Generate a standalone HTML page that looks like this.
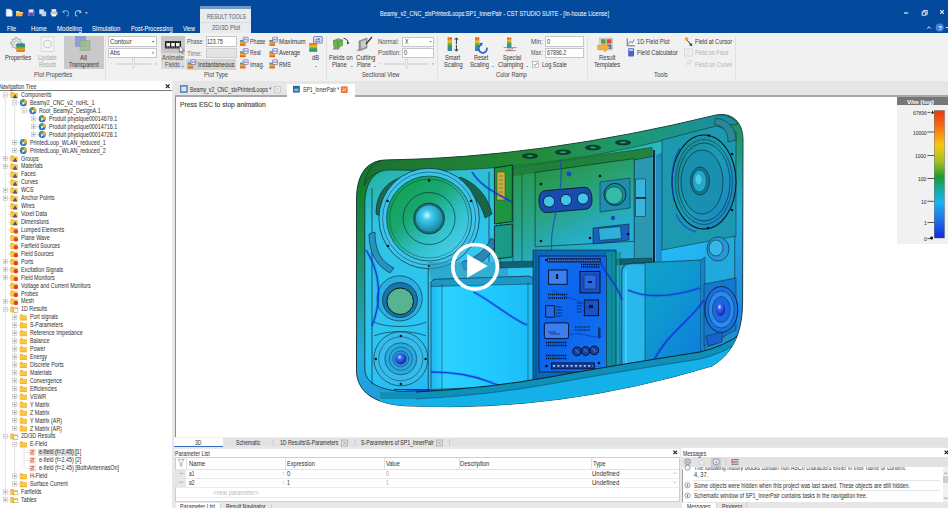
<!DOCTYPE html>
<html><head><meta charset="utf-8"><style>*{box-sizing:border-box}
html,body{margin:0;padding:0;width:948px;height:508px;overflow:hidden;background:#f0f0f0;font-family:"Liberation Sans",sans-serif}
.a{position:absolute}
.t{position:absolute;white-space:pre;line-height:1;transform-origin:0 0}
svg{overflow:visible}</style></head><body>
<div class="a" style="left:0.00px;top:0.00px;width:948.00px;height:33.00px;background:#034a9c;"></div>
<div class="a" style="left:0.00px;top:33.00px;width:948.00px;height:48.00px;background:#f1f1f1;"></div>
<div class="a" style="left:200.30px;top:6.00px;width:50.60px;height:27.00px;background:#e9ecef;"></div>
<div class="a" style="left:200.30px;top:6.00px;width:50.60px;height:3.00px;background:#6f9ac3;"></div>
<div class="a" style="left:200.30px;top:22.30px;width:50.60px;height:0.60px;background:#d6dbe0;"></div>
<svg class="a" style="left:0;top:0" width="100" height="22" viewBox="0 0 100 22">
<path d="M6.2 9.2h4.2l1.8 1.8v5.2h-6z" fill="#f4f6fa" stroke="#c9d3e3" stroke-width=".5"/>
<path d="M16 11h3l1 1h3.4l-1.2 4.2h-6.2z" fill="#f3b341"/><path d="M16.2 11.2h2.6l.8.9h2.4v1H16.2z" fill="#f9d27a"/>
<rect x="28" y="9.4" width="6.4" height="6.6" fill="#7b6fd0"/><rect x="29.2" y="9.6" width="4" height="2.6" fill="#e8e8f5"/><rect x="29.4" y="13.4" width="3.6" height="2.4" fill="#5448a8"/>
<rect x="39.3" y="9.4" width="4.6" height="4.8" fill="#dfe6f2"/><rect x="41.6" y="11.4" width="4.6" height="4.8" fill="#c3cfe3"/>
<rect x="51.6" y="9.2" width="4.6" height="2.6" fill="#f2f2f2"/><rect x="50.6" y="11.6" width="6.8" height="3.4" fill="#c8c8c8"/><rect x="51.6" y="14.2" width="4.6" height="2.2" fill="#fafafa"/>
<path d="M64 10.2 l-1.4 2.2 2.2 .4" fill="none" stroke="#67a7ee" stroke-width="1"/><path d="M63.2 12.1c1.8-2.6 5.4-1.6 5.4 1.4 0 1.4-1 2.4-2 2.6" fill="none" stroke="#67a7ee" stroke-width="1.1"/>
<path d="M79.8 10.2 l1.4 2.2 -2.2 .4" fill="none" stroke="#b8c4d6" stroke-width="1"/><path d="M80.6 12.1c-1.8-2.6-5.4-1.6-5.4 1.4 0 1.4 1 2.4 2 2.6" fill="none" stroke="#b8c4d6" stroke-width="1.1"/>
<path d="M85 12.2h3l-1.5 1.8z" fill="#c9d6ea"/>
</svg>
<svg class="a" style="left:880px;top:0" width="68" height="33" viewBox="880 0 68 33">
<rect x="904" y="12.4" width="4.2" height="1.2" fill="#dfe7f3"/>
<rect x="923.6" y="10.6" width="3.6" height="3.6" fill="none" stroke="#dfe7f3" stroke-width="1"/><rect x="922.2" y="12" width="3.6" height="3.2" fill="#034a9c" stroke="#dfe7f3" stroke-width="1"/>
<path d="M940.2 10.2l3.6 3.6M943.8 10.2l-3.6 3.6" stroke="#e9eef6" stroke-width="1.1"/>
<path d="M927.2 28.6l1.8-1.8 1.8 1.8" fill="none" stroke="#dfe7f3" stroke-width="1"/>
<circle cx="939.7" cy="27.4" r="4" fill="#4d8ff0"/><circle cx="939.7" cy="27.4" r="3.3" fill="#3b7de6"/>
<text x="938.2" y="29.6" font-size="6" font-family="Liberation Sans" font-weight="700" fill="#fff">?</text>
<rect x="945.8" y="27" width="2.2" height="1" fill="#dfe7f3"/>
</svg>
<div class="a" style="left:105.00px;top:36.00px;width:0.80px;height:43.00px;background:#e0e0e0;"></div>
<div class="a" style="left:325.60px;top:36.00px;width:0.80px;height:43.00px;background:#e0e0e0;"></div>
<div class="a" style="left:436.60px;top:36.00px;width:0.80px;height:43.00px;background:#e0e0e0;"></div>
<div class="a" style="left:586.60px;top:36.00px;width:0.80px;height:43.00px;background:#e0e0e0;"></div>
<div class="a" style="left:735.00px;top:36.00px;width:0.80px;height:43.00px;background:#e0e0e0;"></div>
<div class="a" style="left:64.00px;top:35.80px;width:39.60px;height:33.70px;background:#c9c9c9;"></div>
<svg class="a" style="left:0;top:33px" width="110" height="22" viewBox="0 33 110 22">
<defs><linearGradient id="pb" x1="0" y1="0" x2="0" y2="1"><stop offset="0" stop-color="#2f5fd6"/><stop offset=".4" stop-color="#3aa845"/><stop offset=".7" stop-color="#f0a020"/><stop offset="1" stop-color="#e8481c"/></linearGradient></defs>
<path d="M20.60 42.27 L21.85 42.43 L21.85 43.97 L20.60 44.13 L20.00 45.58 L20.77 46.58 L19.68 47.67 L18.68 46.90 L17.23 47.50 L17.07 48.75 L15.53 48.75 L15.37 47.50 L13.92 46.90 L12.92 47.67 L11.83 46.58 L12.60 45.58 L12.00 44.13 L10.75 43.97 L10.75 42.43 L12.00 42.27 L12.60 40.82 L11.83 39.82 L12.92 38.73 L13.92 39.50 L15.37 38.90 L15.53 37.65 L17.07 37.65 L17.23 38.90 L18.68 39.50 L19.68 38.73 L20.77 39.82 L20.00 40.82Z" fill="#e6e6e6" stroke="#8a8a8a" stroke-width=".7"/>
<circle cx="16.3" cy="43.2" r="2.2" fill="#f4f4f4" stroke="#9a9a9a" stroke-width=".6"/>
<rect x="16.2" y="43.4" width="8.8" height="8.4" rx=".8" fill="url(#pb)"/>
<rect x="41.1" y="36.8" width="12.8" height="14.6" fill="#f4f4f4" stroke="#cfcfcf" stroke-width=".7"/>
<circle cx="47.5" cy="44" r="3.8" fill="none" stroke="#c8c8c8" stroke-width="1.1"/>
<rect x="75.6" y="36.6" width="10" height="9.6" fill="#8c9fd6" stroke="#7584c0" stroke-width=".5"/>
<rect x="80" y="40.6" width="10" height="10" fill="#9dbb92" fill-opacity=".85" stroke="#86a57a" stroke-width=".5"/>
</svg>
<div class="a" style="left:108.40px;top:36.40px;width:49.00px;height:10.80px;background:#ffffff;border:0.7px solid #c6c6c6"></div>
<div class="a" style="left:108.40px;top:48.00px;width:49.00px;height:10.20px;background:#ffffff;border:0.7px solid #c6c6c6"></div>
<div class="a" style="left:161.00px;top:36.00px;width:24.30px;height:16.60px;background:#c6c6c6;"></div>
<div class="a" style="left:161.00px;top:52.60px;width:24.30px;height:16.90px;background:#dadada;"></div>
<div class="a" style="left:205.60px;top:36.30px;width:31.70px;height:10.30px;background:#ffffff;border:0.7px solid #c6c6c6"></div>
<div class="a" style="left:205.60px;top:47.70px;width:31.70px;height:10.50px;background:#e3e3e3;border:0.7px solid #d0d0d0"></div>
<div class="a" style="left:186.00px;top:59.00px;width:49.70px;height:10.60px;background:#d3d3d3;"></div>
<svg class="a" style="left:100px;top:33px" width="230" height="40" viewBox="100 33 230 40">
<defs><linearGradient id="rb" x1="0" y1="0" x2="0" y2="1"><stop offset="0" stop-color="#2f7fd6"/><stop offset=".5" stop-color="#f0b020"/><stop offset="1" stop-color="#e8481c"/></linearGradient>
<linearGradient id="db" x1="0" y1="0" x2="0" y2="1"><stop offset="0" stop-color="#e8481c"/><stop offset=".35" stop-color="#f0c020"/><stop offset=".65" stop-color="#3aa845"/><stop offset="1" stop-color="#2f7fd6"/></linearGradient></defs>
<path d="M151.8 41h2.6l-1.3 1.4z" fill="#555"/><path d="M151.8 52.4h2.6l-1.3 1.4z" fill="#555"/>
<rect x="110" y="63.6" width="1.8" height=".6" fill="#bbb"/><rect x="115.7" y="63.4" width="35.3" height="1.2" fill="#cfcfcf"/>
<rect x="132.6" y="59.6" width="2" height="8.4" fill="#f6f6f6" stroke="#c2c2c2" stroke-width=".5"/>
<path d="M155 63.9h2.4M156.2 62.7v2.4" stroke="#bbb" stroke-width=".5"/>
<rect x="165" y="41" width="16" height="7.4" fill="#1a1a1a"/>
<rect x="166.4" y="43" width="3.6" height="3.4" fill="#f4f4f4"/><rect x="171.2" y="43" width="3.6" height="3.4" fill="#f4f4f4"/><rect x="176" y="43" width="3.6" height="3.4" fill="#f4f4f4"/><path d="M165.6 41.9h15M165.6 47.5h15" stroke="#f4f4f4" stroke-width=".45" stroke-dasharray=".8 .9"/>
<path d="M179.4 45.6v7l1.6-1.5 1.2 2.6 1-.5-1.2-2.5h2.2z" fill="#fff" stroke="#222" stroke-width=".5"/>
<path d="M182 66h1.8l-.9 1z" fill="#2a5aa8"/>
<rect x="240" y="40" width="5.6" height="5.8" fill="url(#rb)"/><rect x="243.2" y="37.2" width="5" height="4.8" rx=".5" fill="#f4f5fb" stroke="#4a5aa8" stroke-width=".6"/><path d="M244.4 38.4v2.4M246.9 38.4v2.4M244.4 39.6h2.5" stroke="#3a4a98" stroke-width=".5"/><rect x="240" y="51.4" width="5.6" height="5.8" fill="url(#rb)"/><rect x="243.2" y="48.6" width="5" height="4.8" rx=".5" fill="#f4f5fb" stroke="#4a5aa8" stroke-width=".6"/><path d="M244.4 49.8v2.4M246.9 49.8v2.4M244.4 51.0h2.5" stroke="#3a4a98" stroke-width=".5"/><rect x="240" y="62.6" width="5.6" height="5.8" fill="url(#rb)"/><rect x="243.2" y="59.800000000000004" width="5" height="4.8" rx=".5" fill="#f4f5fb" stroke="#4a5aa8" stroke-width=".6"/><path d="M244.4 61.0v2.4M246.9 61.0v2.4M244.4 62.2h2.5" stroke="#3a4a98" stroke-width=".5"/><rect x="269.4" y="40" width="5.6" height="5.8" fill="url(#rb)"/><rect x="272.59999999999997" y="37.2" width="5" height="4.8" rx=".5" fill="#f4f5fb" stroke="#4a5aa8" stroke-width=".6"/><path d="M273.79999999999995 38.4v2.4M276.29999999999995 38.4v2.4M273.79999999999995 39.6h2.5" stroke="#3a4a98" stroke-width=".5"/><rect x="269.4" y="51.4" width="5.6" height="5.8" fill="url(#rb)"/><rect x="272.59999999999997" y="48.6" width="5" height="4.8" rx=".5" fill="#f4f5fb" stroke="#4a5aa8" stroke-width=".6"/><path d="M273.79999999999995 49.8v2.4M276.29999999999995 49.8v2.4M273.79999999999995 51.0h2.5" stroke="#3a4a98" stroke-width=".5"/><rect x="269.4" y="62.6" width="5.6" height="5.8" fill="url(#rb)"/><rect x="272.59999999999997" y="59.800000000000004" width="5" height="4.8" rx=".5" fill="#f4f5fb" stroke="#4a5aa8" stroke-width=".6"/><path d="M273.79999999999995 61.0v2.4M276.29999999999995 61.0v2.4M273.79999999999995 62.2h2.5" stroke="#3a4a98" stroke-width=".5"/><rect x="187.6" y="62.6" width="5.6" height="5.8" fill="url(#rb)"/><rect x="190.79999999999998" y="59.800000000000004" width="5" height="4.8" rx=".5" fill="#f4f5fb" stroke="#4a5aa8" stroke-width=".6"/><path d="M192.0 61.0v2.4M194.5 61.0v2.4M192.0 62.2h2.5" stroke="#3a4a98" stroke-width=".5"/>
<rect x="313.6" y="36.6" width="8.6" height="6.4" rx=".8" fill="#eef0f8" stroke="#4a5aa8" stroke-width=".8"/>
<text x="314.8" y="41.8" font-size="4.6" font-family="Liberation Sans" fill="#3a4aa0">dB</text>
<rect x="309.2" y="43.2" width="8" height="8.6" fill="url(#db)"/>
<path d="M315 66h1.8l-.9 1z" fill="#2a5aa8"/>
</svg>
<div class="a" style="left:402.00px;top:36.50px;width:32.00px;height:10.10px;background:#ffffff;border:0.7px solid #c6c6c6"></div>
<div class="a" style="left:402.00px;top:47.70px;width:32.00px;height:10.80px;background:#ffffff;border:0.7px solid #c6c6c6"></div>
<div class="a" style="left:545.40px;top:36.30px;width:38.80px;height:10.30px;background:#ffffff;border:0.7px solid #c6c6c6"></div>
<div class="a" style="left:545.40px;top:47.70px;width:38.80px;height:10.80px;background:#ffffff;border:0.7px solid #c6c6c6"></div>
<svg class="a" style="left:325px;top:33px" width="415" height="40" viewBox="325 33 415 40">
<defs><linearGradient id="sb" x1="0" y1="0" x2="0" y2="1"><stop offset="0" stop-color="#e8481c"/><stop offset=".3" stop-color="#f0c020"/><stop offset=".6" stop-color="#3aa845"/><stop offset="1" stop-color="#2f7fd6"/></linearGradient></defs>
<path d="M336 43.2l6-2.4-3 8.6h-6.4z" fill="#8a8a8a"/>
<path d="M333 40.2l5-2 5 1.6v6l-5 2.2-5-1.8z" fill="#6fae56"/><path d="M333 40.2l5 1.8 5-2.2M338 42v6" stroke="#4d8a3a" stroke-width=".5" fill="none"/>
<path d="M343.6 38.4c3 .2 4.6 2.4 4.4 5" fill="none" stroke="#222" stroke-width=".9"/><path d="M346.6 42.4l1.4 2.2 1.2-2.4z" fill="#222"/>
<path d="M351 66h1.8l-.9 1z" fill="#2a5aa8"/><path d="M374 66h1.8l-.9 1z" fill="#2a5aa8"/>
<path d="M359 41l8-3v10l-8 3z" fill="#9b9b9b" stroke="#6a6a6a" stroke-width=".5"/>
<path d="M361 41.5l5-1.8v7l-5 1.8z" fill="#c9c9c9"/>
<path d="M366 44l6-7" stroke="#333" stroke-width="1.2"/><path d="M356.5 51l4-3" stroke="#e0702a" stroke-width=".9"/>
<path d="M429.4 41.2h2.4l-1.2 1.3z" fill="#555"/>
<rect x="378.6" y="63.6" width="2" height=".6" fill="#aaa"/><rect x="384" y="63.4" width="44.4" height="1.2" fill="#cfcfcf"/>
<rect x="405.8" y="59.2" width="2" height="9" fill="#f6f6f6" stroke="#c2c2c2" stroke-width=".5"/>
<path d="M431.6 63.9h2.4M432.8 62.7v2.4" stroke="#aaa" stroke-width=".5"/>
<rect x="447.6" y="37.4" width="4.4" height="13.6" fill="url(#sb)"/>
<path d="M456.4 38v6M454.6 39.8l1.8-2 1.8 2M456.4 45v6M454.6 49.2l1.8 2 1.8-2" stroke="#1a1a1a" stroke-width=".9" fill="none"/>
<rect x="475" y="37.4" width="4.4" height="13.6" fill="url(#sb)"/>
<path d="M481.4 44.6a4.2 4.2 0 1 0 5.4 3" fill="none" stroke="#2a64c4" stroke-width="1.8"/><path d="M479.2 43l3.6-.2-1 3.2z" fill="#2a64c4"/>
<path d="M492 66h1.8l-.9 1z" fill="#2a5aa8"/>
<rect x="507" y="37.6" width="4.4" height="10" fill="url(#sb)"/>
<path d="M503.6 47.6h13M505 50.6h11" stroke="#c23a1a" stroke-width=".6"/>
<text x="507" y="51" font-size="3.6" font-family="Liberation Sans" fill="#555">10T</text>
<path d="M526.4 66h1.8l-.9 1z" fill="#2a5aa8"/>
<path d="M580.2 41.2h0" />
<rect x="532.6" y="61.6" width="5.6" height="5.6" fill="#fff" stroke="#9a9a9a" stroke-width=".6"/>
<path d="M533.8 64.2l1.3 1.5 2.3-2.8" fill="none" stroke="#333" stroke-width=".6"/>
<rect x="599.6" y="38" width="13.2" height="12" fill="#d8d8d8" stroke="#aaa" stroke-width=".4"/>
<rect x="601" y="39.2" width="4.6" height="4.4" fill="#3aa845"/><rect x="606.8" y="39.2" width="4.6" height="4.4" fill="#e34a2a"/>
<rect x="601" y="44.6" width="4.6" height="4.4" fill="#f0b020"/><rect x="606.8" y="44.6" width="4.6" height="4.4" fill="#3f6fd0"/>
<path d="M597.6 45.2h7v-2.4l5.4 4.6-5.4 4.6v-2.4h-7z" fill="#f5b032" stroke="#d08a10" stroke-width=".4"/>
<path d="M627.2 38.4v7.4h7.6" fill="none" stroke="#333" stroke-width=".7"/><path d="M628.4 44l2-3 1.8 2 2.2-3.6" fill="none" stroke="#3b6fd6" stroke-width=".8"/>
<rect x="628.2" y="48.2" width="5.8" height="8.4" rx=".8" fill="#4a62c8"/><rect x="629.2" y="49.2" width="3.8" height="1.8" fill="#c6d0f0"/>
<circle cx="686.6" cy="39" r="1.8" fill="#f0a020"/><path d="M687.4 40.4l3.4 4.2" stroke="#333" stroke-width="1"/><rect x="689.6" y="43.4" width="2.6" height="2.6" fill="#555"/>
<rect x="684.6" y="49" width="8" height="7" fill="none" stroke="#cfcfcf" stroke-width=".7"/><path d="M685.6 52.4h6M688.4 50v5" stroke="#d8d8d8" stroke-width=".5"/>
<path d="M685 67.6l3-5 1.6 2 2.4-4.4" fill="none" stroke="#cfcfcf" stroke-width=".7"/><rect x="688" y="60" width="3" height="3" fill="none" stroke="#d0d0d0" stroke-width=".5"/>
</svg>
<div class="a" style="left:0.00px;top:81.00px;width:171.50px;height:427.00px;background:#ffffff;"></div>
<div class="a" style="left:171.50px;top:81.00px;width:3.10px;height:427.00px;background:#e8e8e8;"></div>
<div class="a" style="left:0.00px;top:90.00px;width:171.50px;height:1.00px;background:#7a7a7a;"></div>
<div class="a" style="left:38.20px;top:448.60px;width:39.80px;height:7.40px;background:#dcdcdc;"></div>
<svg class="a" style="left:0;top:81px" width="171" height="427" viewBox="0 81 171 427"><path d="M5.3 97.4V499.84000000000003" stroke="#d0d0d0" stroke-width=".6"/><path d="M14.7 97.9V150.48000000000002" stroke="#d0d0d0" stroke-width=".6"/><path d="M24.1 105.84V110.78M33.5 113.78V134.60000000000002" stroke="#d0d0d0" stroke-width=".6"/><path d="M14.7 312.28000000000003V428.38M14.7 439.32000000000005V483.96000000000004M24.1 447.26V468.08000000000004" stroke="#d0d0d0" stroke-width=".6"/><path d="M7.3 94.9H10.5" stroke="#d0d0d0" stroke-width=".6"/><rect x="3.1999999999999997" y="92.80000000000001" width="4.2" height="4.2" fill="#fff" stroke="#b4b4b4" stroke-width=".5"/><path d="M4.1 94.9h2.4" stroke="#555" stroke-width=".5"/><path d="M10.5 92.10000000000001h2.6l.8 1h3.6v5h-7z" fill="#f2b230"/><path d="M10.5 93.5h7v3.6h-7z" fill="#f7c64a"/><path d="M15.1 94.30000000000001l2.4 4h-4.8z" fill="#4a5470"/><path d="M16.7 102.84H19.9" stroke="#d0d0d0" stroke-width=".6"/><rect x="12.6" y="100.74000000000001" width="4.2" height="4.2" fill="#fff" stroke="#b4b4b4" stroke-width=".5"/><path d="M13.5 102.84h2.4" stroke="#555" stroke-width=".5"/><circle cx="23.4" cy="102.84" r="3.5" fill="#2f6fd0"/><path d="M23.4 102.84L20.0 102.04A3.5 3.5 0 0 1 24.0 99.39z" fill="#3aa845"/><path d="M23.4 102.84L24.0 99.39A3.5 3.5 0 0 1 26.7 104.04z" fill="#f0a830"/><path d="M22.4 101.84l2.4 1.6-2.4 1.6z" fill="#fff"/><path d="M26.1 110.78H29.3" stroke="#d0d0d0" stroke-width=".6"/><rect x="22.0" y="108.68" width="4.2" height="4.2" fill="#fff" stroke="#b4b4b4" stroke-width=".5"/><path d="M22.900000000000002 110.78h2.4" stroke="#555" stroke-width=".5"/><circle cx="32.8" cy="110.78" r="3.5" fill="#2f6fd0"/><path d="M32.8 110.78L29.4 109.98A3.5 3.5 0 0 1 33.4 107.33z" fill="#3aa845"/><path d="M32.8 110.78L33.4 107.33A3.5 3.5 0 0 1 36.099999999999994 111.98z" fill="#f0a830"/><path d="M31.799999999999997 109.78l2.4 1.6-2.4 1.6z" fill="#fff"/><path d="M35.5 118.72H38.7" stroke="#d0d0d0" stroke-width=".6"/><rect x="31.4" y="116.62" width="4.2" height="4.2" fill="#fff" stroke="#b4b4b4" stroke-width=".5"/><path d="M32.3 118.72h2.4" stroke="#555" stroke-width=".5"/><path d="M33.5 117.52v2.4" stroke="#555" stroke-width=".5"/><circle cx="42.2" cy="118.72" r="3.5" fill="#2f6fd0"/><path d="M42.2 118.72L38.800000000000004 117.92A3.5 3.5 0 0 1 42.800000000000004 115.27z" fill="#3aa845"/><path d="M42.2 118.72L42.800000000000004 115.27A3.5 3.5 0 0 1 45.5 119.92z" fill="#f0a830"/><path d="M41.2 117.72l2.4 1.6-2.4 1.6z" fill="#fff"/><path d="M35.5 126.66000000000001H38.7" stroke="#d0d0d0" stroke-width=".6"/><rect x="31.4" y="124.56000000000002" width="4.2" height="4.2" fill="#fff" stroke="#b4b4b4" stroke-width=".5"/><path d="M32.3 126.66000000000001h2.4" stroke="#555" stroke-width=".5"/><path d="M33.5 125.46000000000001v2.4" stroke="#555" stroke-width=".5"/><circle cx="42.2" cy="126.66000000000001" r="3.5" fill="#2f6fd0"/><path d="M42.2 126.66000000000001L38.800000000000004 125.86000000000001A3.5 3.5 0 0 1 42.800000000000004 123.21000000000001z" fill="#3aa845"/><path d="M42.2 126.66000000000001L42.800000000000004 123.21000000000001A3.5 3.5 0 0 1 45.5 127.86000000000001z" fill="#f0a830"/><path d="M41.2 125.66000000000001l2.4 1.6-2.4 1.6z" fill="#fff"/><path d="M35.5 134.60000000000002H38.7" stroke="#d0d0d0" stroke-width=".6"/><rect x="31.4" y="132.50000000000003" width="4.2" height="4.2" fill="#fff" stroke="#b4b4b4" stroke-width=".5"/><path d="M32.3 134.60000000000002h2.4" stroke="#555" stroke-width=".5"/><path d="M33.5 133.40000000000003v2.4" stroke="#555" stroke-width=".5"/><circle cx="42.2" cy="134.60000000000002" r="3.5" fill="#2f6fd0"/><path d="M42.2 134.60000000000002L38.800000000000004 133.8A3.5 3.5 0 0 1 42.800000000000004 131.15000000000003z" fill="#3aa845"/><path d="M42.2 134.60000000000002L42.800000000000004 131.15000000000003A3.5 3.5 0 0 1 45.5 135.8z" fill="#f0a830"/><path d="M41.2 133.60000000000002l2.4 1.6-2.4 1.6z" fill="#fff"/><path d="M16.7 142.54000000000002H19.9" stroke="#d0d0d0" stroke-width=".6"/><rect x="12.6" y="140.44000000000003" width="4.2" height="4.2" fill="#fff" stroke="#b4b4b4" stroke-width=".5"/><path d="M13.5 142.54000000000002h2.4" stroke="#555" stroke-width=".5"/><path d="M14.7 141.34000000000003v2.4" stroke="#555" stroke-width=".5"/><circle cx="23.4" cy="142.54000000000002" r="3.5" fill="#2f6fd0"/><path d="M23.4 142.54000000000002L20.0 141.74A3.5 3.5 0 0 1 24.0 139.09000000000003z" fill="#3aa845"/><path d="M23.4 142.54000000000002L24.0 139.09000000000003A3.5 3.5 0 0 1 26.7 143.74z" fill="#f0a830"/><path d="M22.4 141.54000000000002l2.4 1.6-2.4 1.6z" fill="#fff"/><path d="M16.7 150.48000000000002H19.9" stroke="#d0d0d0" stroke-width=".6"/><rect x="12.6" y="148.38000000000002" width="4.2" height="4.2" fill="#fff" stroke="#b4b4b4" stroke-width=".5"/><path d="M13.5 150.48000000000002h2.4" stroke="#555" stroke-width=".5"/><path d="M14.7 149.28000000000003v2.4" stroke="#555" stroke-width=".5"/><circle cx="23.4" cy="150.48000000000002" r="3.5" fill="#2f6fd0"/><path d="M23.4 150.48000000000002L20.0 149.68A3.5 3.5 0 0 1 24.0 147.03000000000003z" fill="#3aa845"/><path d="M23.4 150.48000000000002L24.0 147.03000000000003A3.5 3.5 0 0 1 26.7 151.68z" fill="#f0a830"/><path d="M22.4 149.48000000000002l2.4 1.6-2.4 1.6z" fill="#fff"/><path d="M7.3 158.42000000000002H10.5" stroke="#d0d0d0" stroke-width=".6"/><rect x="3.1999999999999997" y="156.32000000000002" width="4.2" height="4.2" fill="#fff" stroke="#b4b4b4" stroke-width=".5"/><path d="M4.1 158.42000000000002h2.4" stroke="#555" stroke-width=".5"/><path d="M5.3 157.22000000000003v2.4" stroke="#555" stroke-width=".5"/><path d="M10.5 155.62h2.6l.8 1h3.6v5h-7z" fill="#f2b230"/><path d="M10.5 157.02h7v3.6h-7z" fill="#f7c64a"/><path d="M15.1 157.82000000000002l2.4 4h-4.8z" fill="#4a5470"/><path d="M7.3 166.36H10.5" stroke="#d0d0d0" stroke-width=".6"/><rect x="3.1999999999999997" y="164.26000000000002" width="4.2" height="4.2" fill="#fff" stroke="#b4b4b4" stroke-width=".5"/><path d="M4.1 166.36h2.4" stroke="#555" stroke-width=".5"/><path d="M5.3 165.16000000000003v2.4" stroke="#555" stroke-width=".5"/><path d="M10.5 163.56h2.6l.8 1h3.6v5h-7z" fill="#f2b230"/><path d="M10.5 164.96h7v3.6h-7z" fill="#f7c64a"/><path d="M15.1 165.76000000000002l2.4 4h-4.8z" fill="#4a5470"/><path d="M7.3 174.3H10.5" stroke="#d0d0d0" stroke-width=".6"/><path d="M10.5 171.5h2.6l.8 1h3.6v5h-7z" fill="#f2b230"/><path d="M10.5 172.9h7v3.6h-7z" fill="#f7c64a"/><path d="M15.1 173.70000000000002l2.4 4h-4.8z" fill="#4a5470"/><path d="M7.3 182.24H10.5" stroke="#d0d0d0" stroke-width=".6"/><path d="M10.5 179.44h2.6l.8 1h3.6v5h-7z" fill="#f2b230"/><path d="M10.5 180.84h7v3.6h-7z" fill="#f7c64a"/><path d="M15.1 181.64000000000001l2.4 4h-4.8z" fill="#4a5470"/><path d="M7.3 190.18H10.5" stroke="#d0d0d0" stroke-width=".6"/><rect x="3.1999999999999997" y="188.08" width="4.2" height="4.2" fill="#fff" stroke="#b4b4b4" stroke-width=".5"/><path d="M4.1 190.18h2.4" stroke="#555" stroke-width=".5"/><path d="M5.3 188.98000000000002v2.4" stroke="#555" stroke-width=".5"/><path d="M10.5 187.38h2.6l.8 1h3.6v5h-7z" fill="#f2b230"/><path d="M10.5 188.78h7v3.6h-7z" fill="#f7c64a"/><path d="M15.1 189.58l2.4 4h-4.8z" fill="#4a5470"/><path d="M7.3 198.12H10.5" stroke="#d0d0d0" stroke-width=".6"/><rect x="3.1999999999999997" y="196.02" width="4.2" height="4.2" fill="#fff" stroke="#b4b4b4" stroke-width=".5"/><path d="M4.1 198.12h2.4" stroke="#555" stroke-width=".5"/><path d="M5.3 196.92000000000002v2.4" stroke="#555" stroke-width=".5"/><path d="M10.5 195.32h2.6l.8 1h3.6v5h-7z" fill="#f2b230"/><path d="M10.5 196.72h7v3.6h-7z" fill="#f7c64a"/><path d="M15.1 197.52l2.4 4h-4.8z" fill="#4a5470"/><path d="M7.3 206.06H10.5" stroke="#d0d0d0" stroke-width=".6"/><path d="M10.5 203.26h2.6l.8 1h3.6v5h-7z" fill="#f2b230"/><path d="M10.5 204.66h7v3.6h-7z" fill="#f7c64a"/><path d="M15.1 205.46l2.4 4h-4.8z" fill="#4a5470"/><path d="M7.3 214.0H10.5" stroke="#d0d0d0" stroke-width=".6"/><path d="M10.5 211.2h2.6l.8 1h3.6v5h-7z" fill="#f2b230"/><path d="M10.5 212.6h7v3.6h-7z" fill="#f7c64a"/><path d="M15.1 213.4l2.4 4h-4.8z" fill="#4a5470"/><path d="M7.3 221.94H10.5" stroke="#d0d0d0" stroke-width=".6"/><path d="M10.5 219.14h2.6l.8 1h3.6v5h-7z" fill="#f2b230"/><path d="M10.5 220.54h7v3.6h-7z" fill="#f7c64a"/><path d="M15.1 221.34l2.4 4h-4.8z" fill="#4a5470"/><path d="M7.3 229.88000000000002H10.5" stroke="#d0d0d0" stroke-width=".6"/><path d="M10.5 227.08h2.6l.8 1h3.6v5h-7z" fill="#f2b230"/><path d="M10.5 228.48000000000002h7v3.6h-7z" fill="#f7c64a"/><circle cx="15.9" cy="231.48000000000002" r="2.2" fill="#e0421c"/><path d="M7.3 237.82000000000002H10.5" stroke="#d0d0d0" stroke-width=".6"/><path d="M10.5 235.02h2.6l.8 1h3.6v5h-7z" fill="#f2b230"/><path d="M10.5 236.42000000000002h7v3.6h-7z" fill="#f7c64a"/><circle cx="15.9" cy="239.42000000000002" r="2.2" fill="#e0421c"/><path d="M7.3 245.76000000000002H10.5" stroke="#d0d0d0" stroke-width=".6"/><path d="M10.5 242.96h2.6l.8 1h3.6v5h-7z" fill="#f2b230"/><path d="M10.5 244.36h7v3.6h-7z" fill="#f7c64a"/><circle cx="15.9" cy="247.36" r="2.2" fill="#e0421c"/><path d="M7.3 253.70000000000002H10.5" stroke="#d0d0d0" stroke-width=".6"/><path d="M10.5 250.9h2.6l.8 1h3.6v5h-7z" fill="#f2b230"/><path d="M10.5 252.3h7v3.6h-7z" fill="#f7c64a"/><circle cx="15.9" cy="255.3" r="2.2" fill="#e0421c"/><path d="M7.3 261.64H10.5" stroke="#d0d0d0" stroke-width=".6"/><rect x="3.1999999999999997" y="259.53999999999996" width="4.2" height="4.2" fill="#fff" stroke="#b4b4b4" stroke-width=".5"/><path d="M4.1 261.64h2.4" stroke="#555" stroke-width=".5"/><path d="M5.3 260.44v2.4" stroke="#555" stroke-width=".5"/><path d="M10.5 258.84h2.6l.8 1h3.6v5h-7z" fill="#f2b230"/><path d="M10.5 260.24h7v3.6h-7z" fill="#f7c64a"/><circle cx="15.9" cy="263.24" r="2.2" fill="#e0421c"/><path d="M7.3 269.58000000000004H10.5" stroke="#d0d0d0" stroke-width=".6"/><rect x="3.1999999999999997" y="267.48" width="4.2" height="4.2" fill="#fff" stroke="#b4b4b4" stroke-width=".5"/><path d="M4.1 269.58000000000004h2.4" stroke="#555" stroke-width=".5"/><path d="M5.3 268.38000000000005v2.4" stroke="#555" stroke-width=".5"/><path d="M10.5 266.78000000000003h2.6l.8 1h3.6v5h-7z" fill="#f2b230"/><path d="M10.5 268.18000000000006h7v3.6h-7z" fill="#f7c64a"/><circle cx="15.9" cy="271.18000000000006" r="2.2" fill="#e0421c"/><path d="M7.3 277.52H10.5" stroke="#d0d0d0" stroke-width=".6"/><rect x="3.1999999999999997" y="275.41999999999996" width="4.2" height="4.2" fill="#fff" stroke="#b4b4b4" stroke-width=".5"/><path d="M4.1 277.52h2.4" stroke="#555" stroke-width=".5"/><path d="M5.3 276.32v2.4" stroke="#555" stroke-width=".5"/><path d="M10.5 274.71999999999997h2.6l.8 1h3.6v5h-7z" fill="#f2b230"/><path d="M10.5 276.12h7v3.6h-7z" fill="#f7c64a"/><circle cx="15.9" cy="279.12" r="2.2" fill="#e0421c"/><path d="M7.3 285.46000000000004H10.5" stroke="#d0d0d0" stroke-width=".6"/><path d="M10.5 282.66h2.6l.8 1h3.6v5h-7z" fill="#f2b230"/><path d="M10.5 284.06000000000006h7v3.6h-7z" fill="#f7c64a"/><circle cx="15.9" cy="287.06000000000006" r="2.2" fill="#e0421c"/><path d="M7.3 293.4H10.5" stroke="#d0d0d0" stroke-width=".6"/><path d="M10.5 290.59999999999997h2.6l.8 1h3.6v5h-7z" fill="#f2b230"/><path d="M10.5 292.0h7v3.6h-7z" fill="#f7c64a"/><circle cx="15.9" cy="295.0" r="2.2" fill="#e0421c"/><path d="M7.3 301.34000000000003H10.5" stroke="#d0d0d0" stroke-width=".6"/><rect x="3.1999999999999997" y="299.24" width="4.2" height="4.2" fill="#fff" stroke="#b4b4b4" stroke-width=".5"/><path d="M4.1 301.34000000000003h2.4" stroke="#555" stroke-width=".5"/><path d="M5.3 300.14000000000004v2.4" stroke="#555" stroke-width=".5"/><path d="M10.5 298.54h2.6l.8 1h3.6v5h-7z" fill="#f2b230"/><path d="M10.5 299.94000000000005h7v3.6h-7z" fill="#f7c64a"/><circle cx="15.9" cy="302.94000000000005" r="2.2" fill="#e0421c"/><path d="M7.3 309.28000000000003H10.5" stroke="#d0d0d0" stroke-width=".6"/><rect x="3.1999999999999997" y="307.18" width="4.2" height="4.2" fill="#fff" stroke="#b4b4b4" stroke-width=".5"/><path d="M4.1 309.28000000000003h2.4" stroke="#555" stroke-width=".5"/><path d="M10.5 306.48h2.6l.8 1h3.6v5h-7z" fill="#f2b230"/><path d="M10.5 307.88000000000005h7v3.6h-7z" fill="#f7c64a"/><rect x="13.9" y="308.68" width="4" height="3.6" fill="#fff" stroke="#888" stroke-width=".4"/><path d="M16.7 317.22H19.9" stroke="#d0d0d0" stroke-width=".6"/><rect x="12.6" y="315.12" width="4.2" height="4.2" fill="#fff" stroke="#b4b4b4" stroke-width=".5"/><path d="M13.5 317.22h2.4" stroke="#555" stroke-width=".5"/><path d="M14.7 316.02000000000004v2.4" stroke="#555" stroke-width=".5"/><path d="M19.9 314.42h2.6l.8 1h3.6v5h-7z" fill="#f2b230"/><path d="M19.9 315.82000000000005h7v3.6h-7z" fill="#f7c64a"/><path d="M16.7 325.16H19.9" stroke="#d0d0d0" stroke-width=".6"/><rect x="12.6" y="323.06" width="4.2" height="4.2" fill="#fff" stroke="#b4b4b4" stroke-width=".5"/><path d="M13.5 325.16h2.4" stroke="#555" stroke-width=".5"/><path d="M14.7 323.96000000000004v2.4" stroke="#555" stroke-width=".5"/><path d="M19.9 322.36h2.6l.8 1h3.6v5h-7z" fill="#f2b230"/><path d="M19.9 323.76000000000005h7v3.6h-7z" fill="#f7c64a"/><path d="M16.7 333.1H19.9" stroke="#d0d0d0" stroke-width=".6"/><rect x="12.6" y="331.0" width="4.2" height="4.2" fill="#fff" stroke="#b4b4b4" stroke-width=".5"/><path d="M13.5 333.1h2.4" stroke="#555" stroke-width=".5"/><path d="M14.7 331.90000000000003v2.4" stroke="#555" stroke-width=".5"/><path d="M19.9 330.3h2.6l.8 1h3.6v5h-7z" fill="#f2b230"/><path d="M19.9 331.70000000000005h7v3.6h-7z" fill="#f7c64a"/><path d="M16.7 341.04H19.9" stroke="#d0d0d0" stroke-width=".6"/><rect x="12.6" y="338.94" width="4.2" height="4.2" fill="#fff" stroke="#b4b4b4" stroke-width=".5"/><path d="M13.5 341.04h2.4" stroke="#555" stroke-width=".5"/><path d="M14.7 339.84000000000003v2.4" stroke="#555" stroke-width=".5"/><path d="M19.9 338.24h2.6l.8 1h3.6v5h-7z" fill="#f2b230"/><path d="M19.9 339.64000000000004h7v3.6h-7z" fill="#f7c64a"/><path d="M16.7 348.98H19.9" stroke="#d0d0d0" stroke-width=".6"/><rect x="12.6" y="346.88" width="4.2" height="4.2" fill="#fff" stroke="#b4b4b4" stroke-width=".5"/><path d="M13.5 348.98h2.4" stroke="#555" stroke-width=".5"/><path d="M14.7 347.78000000000003v2.4" stroke="#555" stroke-width=".5"/><path d="M19.9 346.18h2.6l.8 1h3.6v5h-7z" fill="#f2b230"/><path d="M19.9 347.58000000000004h7v3.6h-7z" fill="#f7c64a"/><path d="M16.7 356.9200000000001H19.9" stroke="#d0d0d0" stroke-width=".6"/><rect x="12.6" y="354.82000000000005" width="4.2" height="4.2" fill="#fff" stroke="#b4b4b4" stroke-width=".5"/><path d="M13.5 356.9200000000001h2.4" stroke="#555" stroke-width=".5"/><path d="M14.7 355.7200000000001v2.4" stroke="#555" stroke-width=".5"/><path d="M19.9 354.12000000000006h2.6l.8 1h3.6v5h-7z" fill="#f2b230"/><path d="M19.9 355.5200000000001h7v3.6h-7z" fill="#f7c64a"/><path d="M16.7 364.86H19.9" stroke="#d0d0d0" stroke-width=".6"/><rect x="12.6" y="362.76" width="4.2" height="4.2" fill="#fff" stroke="#b4b4b4" stroke-width=".5"/><path d="M13.5 364.86h2.4" stroke="#555" stroke-width=".5"/><path d="M14.7 363.66v2.4" stroke="#555" stroke-width=".5"/><path d="M19.9 362.06h2.6l.8 1h3.6v5h-7z" fill="#f2b230"/><path d="M19.9 363.46000000000004h7v3.6h-7z" fill="#f7c64a"/><path d="M16.7 372.80000000000007H19.9" stroke="#d0d0d0" stroke-width=".6"/><rect x="12.6" y="370.70000000000005" width="4.2" height="4.2" fill="#fff" stroke="#b4b4b4" stroke-width=".5"/><path d="M13.5 372.80000000000007h2.4" stroke="#555" stroke-width=".5"/><path d="M14.7 371.6000000000001v2.4" stroke="#555" stroke-width=".5"/><path d="M19.9 370.00000000000006h2.6l.8 1h3.6v5h-7z" fill="#f2b230"/><path d="M19.9 371.4000000000001h7v3.6h-7z" fill="#f7c64a"/><path d="M16.7 380.74H19.9" stroke="#d0d0d0" stroke-width=".6"/><rect x="12.6" y="378.64" width="4.2" height="4.2" fill="#fff" stroke="#b4b4b4" stroke-width=".5"/><path d="M13.5 380.74h2.4" stroke="#555" stroke-width=".5"/><path d="M14.7 379.54v2.4" stroke="#555" stroke-width=".5"/><path d="M19.9 377.94h2.6l.8 1h3.6v5h-7z" fill="#f2b230"/><path d="M19.9 379.34000000000003h7v3.6h-7z" fill="#f7c64a"/><path d="M16.7 388.68000000000006H19.9" stroke="#d0d0d0" stroke-width=".6"/><rect x="12.6" y="386.58000000000004" width="4.2" height="4.2" fill="#fff" stroke="#b4b4b4" stroke-width=".5"/><path d="M13.5 388.68000000000006h2.4" stroke="#555" stroke-width=".5"/><path d="M14.7 387.4800000000001v2.4" stroke="#555" stroke-width=".5"/><path d="M19.9 385.88000000000005h2.6l.8 1h3.6v5h-7z" fill="#f2b230"/><path d="M19.9 387.2800000000001h7v3.6h-7z" fill="#f7c64a"/><path d="M16.7 396.62H19.9" stroke="#d0d0d0" stroke-width=".6"/><rect x="12.6" y="394.52" width="4.2" height="4.2" fill="#fff" stroke="#b4b4b4" stroke-width=".5"/><path d="M13.5 396.62h2.4" stroke="#555" stroke-width=".5"/><path d="M14.7 395.42v2.4" stroke="#555" stroke-width=".5"/><path d="M19.9 393.82h2.6l.8 1h3.6v5h-7z" fill="#f2b230"/><path d="M19.9 395.22h7v3.6h-7z" fill="#f7c64a"/><path d="M16.7 404.56000000000006H19.9" stroke="#d0d0d0" stroke-width=".6"/><rect x="12.6" y="402.46000000000004" width="4.2" height="4.2" fill="#fff" stroke="#b4b4b4" stroke-width=".5"/><path d="M13.5 404.56000000000006h2.4" stroke="#555" stroke-width=".5"/><path d="M14.7 403.36000000000007v2.4" stroke="#555" stroke-width=".5"/><path d="M19.9 401.76000000000005h2.6l.8 1h3.6v5h-7z" fill="#f2b230"/><path d="M19.9 403.1600000000001h7v3.6h-7z" fill="#f7c64a"/><path d="M16.7 412.5H19.9" stroke="#d0d0d0" stroke-width=".6"/><rect x="12.6" y="410.4" width="4.2" height="4.2" fill="#fff" stroke="#b4b4b4" stroke-width=".5"/><path d="M13.5 412.5h2.4" stroke="#555" stroke-width=".5"/><path d="M14.7 411.3v2.4" stroke="#555" stroke-width=".5"/><path d="M19.9 409.7h2.6l.8 1h3.6v5h-7z" fill="#f2b230"/><path d="M19.9 411.1h7v3.6h-7z" fill="#f7c64a"/><path d="M16.7 420.44000000000005H19.9" stroke="#d0d0d0" stroke-width=".6"/><rect x="12.6" y="418.34000000000003" width="4.2" height="4.2" fill="#fff" stroke="#b4b4b4" stroke-width=".5"/><path d="M13.5 420.44000000000005h2.4" stroke="#555" stroke-width=".5"/><path d="M14.7 419.24000000000007v2.4" stroke="#555" stroke-width=".5"/><path d="M19.9 417.64000000000004h2.6l.8 1h3.6v5h-7z" fill="#f2b230"/><path d="M19.9 419.0400000000001h7v3.6h-7z" fill="#f7c64a"/><path d="M16.7 428.38H19.9" stroke="#d0d0d0" stroke-width=".6"/><rect x="12.6" y="426.28" width="4.2" height="4.2" fill="#fff" stroke="#b4b4b4" stroke-width=".5"/><path d="M13.5 428.38h2.4" stroke="#555" stroke-width=".5"/><path d="M14.7 427.18v2.4" stroke="#555" stroke-width=".5"/><path d="M19.9 425.58h2.6l.8 1h3.6v5h-7z" fill="#f2b230"/><path d="M19.9 426.98h7v3.6h-7z" fill="#f7c64a"/><path d="M7.3 436.32000000000005H10.5" stroke="#d0d0d0" stroke-width=".6"/><rect x="3.1999999999999997" y="434.22" width="4.2" height="4.2" fill="#fff" stroke="#b4b4b4" stroke-width=".5"/><path d="M4.1 436.32000000000005h2.4" stroke="#555" stroke-width=".5"/><path d="M10.5 433.52000000000004h2.6l.8 1h3.6v5h-7z" fill="#f2b230"/><path d="M10.5 434.9200000000001h7v3.6h-7z" fill="#f7c64a"/><rect x="13.9" y="435.72" width="4" height="3.6" fill="#fff" stroke="#888" stroke-width=".4"/><path d="M16.7 444.26H19.9" stroke="#d0d0d0" stroke-width=".6"/><rect x="12.6" y="442.15999999999997" width="4.2" height="4.2" fill="#fff" stroke="#b4b4b4" stroke-width=".5"/><path d="M13.5 444.26h2.4" stroke="#555" stroke-width=".5"/><path d="M19.9 441.46h2.6l.8 1h3.6v5h-7z" fill="#f2b230"/><path d="M19.9 442.86h7v3.6h-7z" fill="#f7c64a"/><path d="M26.1 452.20000000000005H29.3" stroke="#d0d0d0" stroke-width=".6"/><rect x="29.3" y="449.20000000000005" width="6.4" height="6" fill="#f6f6f6" stroke="#c8c8c8" stroke-width=".3"/><path d="M30.3 450.6h4l-4 2.4h4" fill="none" stroke="#d8401c" stroke-width=".7"/><path d="M30.3 454.20000000000005h4" stroke="#e06030" stroke-width=".7"/><path d="M26.1 460.14H29.3" stroke="#d0d0d0" stroke-width=".6"/><rect x="29.3" y="457.14" width="6.4" height="6" fill="#f6f6f6" stroke="#c8c8c8" stroke-width=".3"/><path d="M30.3 458.53999999999996h4l-4 2.4h4" fill="none" stroke="#d8401c" stroke-width=".7"/><path d="M30.3 462.14h4" stroke="#e06030" stroke-width=".7"/><path d="M26.1 468.08000000000004H29.3" stroke="#d0d0d0" stroke-width=".6"/><rect x="29.3" y="465.08000000000004" width="6.4" height="6" fill="#f6f6f6" stroke="#c8c8c8" stroke-width=".3"/><path d="M30.3 466.48h4l-4 2.4h4" fill="none" stroke="#d8401c" stroke-width=".7"/><path d="M30.3 470.08000000000004h4" stroke="#e06030" stroke-width=".7"/><path d="M16.7 476.02H19.9" stroke="#d0d0d0" stroke-width=".6"/><rect x="12.6" y="473.91999999999996" width="4.2" height="4.2" fill="#fff" stroke="#b4b4b4" stroke-width=".5"/><path d="M13.5 476.02h2.4" stroke="#555" stroke-width=".5"/><path d="M14.7 474.82v2.4" stroke="#555" stroke-width=".5"/><path d="M19.9 473.21999999999997h2.6l.8 1h3.6v5h-7z" fill="#f2b230"/><path d="M19.9 474.62h7v3.6h-7z" fill="#f7c64a"/><path d="M16.7 483.96000000000004H19.9" stroke="#d0d0d0" stroke-width=".6"/><rect x="12.6" y="481.86" width="4.2" height="4.2" fill="#fff" stroke="#b4b4b4" stroke-width=".5"/><path d="M13.5 483.96000000000004h2.4" stroke="#555" stroke-width=".5"/><path d="M14.7 482.76000000000005v2.4" stroke="#555" stroke-width=".5"/><path d="M19.9 481.16h2.6l.8 1h3.6v5h-7z" fill="#f2b230"/><path d="M19.9 482.56000000000006h7v3.6h-7z" fill="#f7c64a"/><path d="M7.3 491.9H10.5" stroke="#d0d0d0" stroke-width=".6"/><rect x="3.1999999999999997" y="489.79999999999995" width="4.2" height="4.2" fill="#fff" stroke="#b4b4b4" stroke-width=".5"/><path d="M4.1 491.9h2.4" stroke="#555" stroke-width=".5"/><path d="M5.3 490.7v2.4" stroke="#555" stroke-width=".5"/><path d="M10.5 489.09999999999997h2.6l.8 1h3.6v5h-7z" fill="#f2b230"/><path d="M10.5 490.5h7v3.6h-7z" fill="#f7c64a"/><rect x="13.9" y="491.29999999999995" width="4" height="3.6" fill="#fff" stroke="#888" stroke-width=".4"/><path d="M7.3 499.84000000000003H10.5" stroke="#d0d0d0" stroke-width=".6"/><rect x="3.1999999999999997" y="497.74" width="4.2" height="4.2" fill="#fff" stroke="#b4b4b4" stroke-width=".5"/><path d="M4.1 499.84000000000003h2.4" stroke="#555" stroke-width=".5"/><path d="M5.3 498.64000000000004v2.4" stroke="#555" stroke-width=".5"/><path d="M10.5 497.04h2.6l.8 1h3.6v5h-7z" fill="#f2b230"/><path d="M10.5 498.44000000000005h7v3.6h-7z" fill="#f7c64a"/><rect x="13.9" y="499.24" width="4" height="3.6" fill="#fff" stroke="#888" stroke-width=".4"/></svg>
<div class="a" style="left:174.60px;top:81.00px;width:773.40px;height:13.60px;background:#e6e6e6;"></div>
<div class="a" style="left:287.00px;top:84.30px;width:67.60px;height:11.70px;background:#ffffff;"></div>
<div class="a" style="left:174.60px;top:95.00px;width:773.40px;height:1.60px;background:#a8a8a8;"></div>
<div class="a" style="left:287.00px;top:95.00px;width:67.60px;height:1.60px;background:#ffffff;"></div>
<svg class="a" style="left:174px;top:81px" width="190" height="16" viewBox="174 81 190 16">
<rect x="180.2" y="85.4" width="7.4" height="7.2" fill="#5d8fcf" stroke="#3c6aa8" stroke-width=".5"/><rect x="181.4" y="86.8" width="5" height="4.4" fill="#d8e6f6"/>
<rect x="274.6" y="86.4" width="6" height="6" fill="#f0f0f0" stroke="#b8b8b8" stroke-width=".6"/><path d="M275.9 87.7l3.4 3.4M279.3 87.7l-3.4 3.4" stroke="#b0b0b0" stroke-width=".5"/>
<rect x="293" y="85.8" width="6.8" height="6.8" fill="#1d6e96"/><rect x="294.2" y="88.6" width="4.2" height="2.6" fill="#7fb8d6"/>
<rect x="340.9" y="86.4" width="6.8" height="6.6" fill="#e8743b"/><path d="M342.4 87.9l3.8 3.6M346.2 87.9l-3.8 3.6" stroke="#fff" stroke-width=".7"/>
</svg>
<div class="a" style="left:174.60px;top:96.60px;width:773.40px;height:340.90px;background:#ffffff;"></div>
<div class="a" style="left:174.60px;top:96.60px;width:1.60px;height:340.90px;background:#8d8d8d;"></div>
<div class="a" style="left:897.30px;top:97.40px;width:50.70px;height:7.50px;background:#767676;"></div>
<div class="a" style="left:897.30px;top:105.10px;width:50.70px;height:139.20px;background:#f1f1f1;"></div>
<svg class="a" style="left:897px;top:105px" width="51" height="140" viewBox="897 105 51 140">
<defs><linearGradient id="lg" x1="0" y1="0" x2="0" y2="1">
<stop offset="0" stop-color="#e83a10"/><stop offset=".12" stop-color="#f46a10"/><stop offset=".27" stop-color="#f6c814"/><stop offset=".40" stop-color="#a6c020"/><stop offset=".52" stop-color="#1e9a30"/><stop offset=".62" stop-color="#18a8a0"/><stop offset=".72" stop-color="#16b4ee"/><stop offset=".86" stop-color="#2070e8"/><stop offset="1" stop-color="#1428e0"/></linearGradient></defs>
<rect x="934.2" y="110.5" width="10.3" height="127.5" fill="url(#lg)" stroke="#555" stroke-width=".4"/>
<path d="M927.4 132h6.8M927.4 155.5h6.8M927.4 178.5h6.8M927.4 201.3h6.8M927.4 222.5h6.8M927.4 112.4h3M927.4 238.6h3" stroke="#222" stroke-width=".75"/>
<path d="M931 113.6l1.6-3 1.6 3z" fill="#111"/><circle cx="931.6" cy="238" r="1.5" fill="#111"/>
</svg>
<div class="a" style="left:174.60px;top:437.50px;width:773.40px;height:9.80px;background:#e3e3e3;"></div>
<div class="a" style="left:174.30px;top:437.50px;width:48.90px;height:8.90px;background:#ffffff;"></div>
<div class="a" style="left:174.30px;top:446.00px;width:48.90px;height:1.00px;background:#2f6fc0;"></div>
<svg class="a" style="left:260px;top:437px" width="200" height="11" viewBox="260 437 200 11">
<path d="M273 439.5v6M355 439.5v6M449.6 439.5v6" stroke="#b0b0b0" stroke-width=".5"/>
<rect x="341.6" y="440" width="6" height="6" fill="#e4e4e4" stroke="#9a9a9a" stroke-width=".6"/><path d="M342.9 441.3l3.4 3.4M346.3 441.3l-3.4 3.4" stroke="#888" stroke-width=".6"/>
<rect x="436.6" y="440" width="6" height="6" fill="#e4e4e4" stroke="#9a9a9a" stroke-width=".6"/><path d="M437.9 441.3l3.4 3.4M441.3 441.3l-3.4 3.4" stroke="#888" stroke-width=".6"/>
</svg>
<div class="a" style="left:174.60px;top:447.30px;width:506.40px;height:60.70px;background:#e8e8e8;"></div>
<div class="a" style="left:174.60px;top:449.30px;width:505.00px;height:7.70px;background:#ffffff;"></div>
<div class="a" style="left:174.60px;top:457.00px;width:505.00px;height:45.40px;background:#ffffff;border:0.7px solid #cfcfcf"></div>
<div class="a" style="left:176.40px;top:469.00px;width:502.60px;height:0.60px;background:#e4e4e4;"></div>
<div class="a" style="left:176.40px;top:478.00px;width:502.60px;height:0.50px;background:#ececec;"></div>
<div class="a" style="left:176.40px;top:487.00px;width:502.60px;height:0.50px;background:#ececec;"></div>
<div class="a" style="left:176.40px;top:497.00px;width:502.60px;height:0.50px;background:#ececec;"></div>
<div class="a" style="left:186.40px;top:457.80px;width:0.50px;height:11.20px;background:#e2e2e2;"></div>
<div class="a" style="left:284.50px;top:457.80px;width:0.50px;height:11.20px;background:#e2e2e2;"></div>
<div class="a" style="left:383.80px;top:457.80px;width:0.50px;height:11.20px;background:#e2e2e2;"></div>
<div class="a" style="left:459.00px;top:457.80px;width:0.50px;height:11.20px;background:#e2e2e2;"></div>
<div class="a" style="left:590.70px;top:457.80px;width:0.50px;height:11.20px;background:#e2e2e2;"></div>
<div class="a" style="left:175.20px;top:469.60px;width:11.00px;height:17.40px;background:#e6e6e6;"></div>
<div class="a" style="left:176.00px;top:503.00px;width:44.00px;height:5.00px;background:#ffffff;"></div>
<svg class="a" style="left:174px;top:455px" width="510" height="53" viewBox="174 455 510 53">
<path d="M178 459.4h6l-2.2 3v4l-1.6-.8v-3.2z" fill="none" stroke="#777" stroke-width=".55"/>
<path d="M179.4 473.4h4M179.4 482.4h4" stroke="#9a9a9a" stroke-width=".9" stroke-dasharray=".9 .5"/>
<path d="M673.4 472.6l1.4 1.4 1.4-1.4M673.4 481.6l1.4 1.4 1.4-1.4" fill="none" stroke="#888" stroke-width=".5"/>
<path d="M220.5 503.5v4.5M271.4 503.5v4.5" stroke="#bbb" stroke-width=".5"/>
</svg>
<div class="a" style="left:681.00px;top:447.30px;width:267.00px;height:60.70px;background:#e8e8e8;"></div>
<div class="a" style="left:681.00px;top:447.60px;width:267.00px;height:9.40px;background:#ffffff;"></div>
<div class="a" style="left:681.00px;top:457.00px;width:267.00px;height:10.00px;background:#e2e2e2;"></div>
<div class="a" style="left:711.00px;top:457.60px;width:10.40px;height:9.00px;background:#c9c9c9;"></div>
<div class="a" style="left:681.60px;top:467.00px;width:261.40px;height:35.00px;background:#ffffff;border-left:1px solid #a0a0a0"></div>
<div class="a" style="left:693.00px;top:480.20px;width:247.00px;height:0.50px;background:#e6e6e6;"></div>
<div class="a" style="left:693.00px;top:490.40px;width:247.00px;height:0.50px;background:#e6e6e6;"></div>
<div class="a" style="left:681.60px;top:467.00px;width:261.40px;height:2.20px;background:#ffffff;"></div>
<div class="a" style="left:943.00px;top:467.00px;width:5.00px;height:35.00px;background:#f0f0f0;"></div>
<div class="a" style="left:943.40px;top:476.00px;width:4.60px;height:7.00px;background:#cdcdcd;"></div>
<div class="a" style="left:681.00px;top:502.00px;width:267.00px;height:6.00px;background:#e6e6e6;"></div>
<div class="a" style="left:682.00px;top:502.60px;width:34.00px;height:5.40px;background:#ffffff;"></div>
<svg class="a" style="left:681px;top:457px" width="267" height="51" viewBox="681 457 267 51">
<circle cx="687.6" cy="461.8" r="3.2" fill="#9a9a9a"/><circle cx="687.6" cy="461.8" r="2.3" fill="#d8d8d8"/><path d="M686.4 460.6l2.4 2.4M688.8 460.6l-2.4 2.4" stroke="#888" stroke-width=".7"/>
<path d="M701.7 459l3 5.2h-6z" fill="#ececec" stroke="#c6c6c6" stroke-width=".5"/>
<circle cx="716.2" cy="461.8" r="3" fill="#f4f4f4" stroke="#6f7fa8" stroke-width=".7"/><rect x="715.8" y="460.8" width=".8" height="2.6" fill="#4a5a90"/>
<path d="M725.7 458.6v7" stroke="#bdbdbd" stroke-width=".5"/>
<rect x="731.4" y="459" width="2" height="1.4" fill="#d8401c"/><path d="M734 459.7h4.6M731.4 462h7.2M731.4 464.2h7.2" stroke="#333" stroke-width=".7"/><path d="M731.6 461.4l1.6 1.6M733.2 461.4l-1.6 1.6" stroke="#d8401c" stroke-width=".6"/>
<circle cx="687.5" cy="467.8" r="2.6" fill="#f4f4f4" stroke="#5f6f9a" stroke-width=".6"/>
<circle cx="687.5" cy="485.2" r="2.6" fill="#f4f4f4" stroke="#5f6f9a" stroke-width=".6"/><rect x="687.1" y="484.3" width=".8" height="2.2" fill="#3a4a80"/>
<circle cx="687.5" cy="495.6" r="2.6" fill="#f4f4f4" stroke="#5f6f9a" stroke-width=".6"/><rect x="687.1" y="494.7" width=".8" height="2.2" fill="#3a4a80"/>
<path d="M944.2 474.2l1.6-1.6 1.6 1.6M944.2 497.4l1.6 1.6 1.6-1.6" fill="none" stroke="#555" stroke-width=".6"/>
<path d="M716.4 502.6v5.4M746.4 502.6v5.4" stroke="#bbb" stroke-width=".5"/>
</svg>
<svg class="a" style="left:176px;top:96px" width="772" height="341" viewBox="176 96 772 341">
<defs>
<linearGradient id="mbody" x1="420" y1="140" x2="520" y2="400" gradientUnits="userSpaceOnUse">
<stop offset="0" stop-color="#107424"/><stop offset=".22" stop-color="#1a8a40"/><stop offset=".45" stop-color="#1f9a98"/><stop offset=".65" stop-color="#24acdc"/><stop offset="1" stop-color="#1e88e0"/></linearGradient>
<linearGradient id="mface" x1="360" y1="160" x2="520" y2="420" gradientUnits="userSpaceOnUse">
<stop offset="0" stop-color="#20b098"/><stop offset=".2" stop-color="#30c4e4"/><stop offset=".6" stop-color="#2cc4f4"/><stop offset="1" stop-color="#20a8f0"/></linearGradient>
<linearGradient id="greenov" x1="0" y1="0" x2="0" y2="1">
<stop offset="0" stop-color="#1f8a30" stop-opacity=".5"/><stop offset=".2" stop-color="#2a9a40" stop-opacity=".12"/><stop offset=".4" stop-color="#2a9a40" stop-opacity="0"/></linearGradient>
<linearGradient id="mrim" x1="356" y1="0" x2="744" y2="0" gradientUnits="userSpaceOnUse">
<stop offset="0" stop-color="#1a7030"/><stop offset=".45" stop-color="#238a38"/><stop offset=".7" stop-color="#1e9a70"/><stop offset="1" stop-color="#1a8ca8"/></linearGradient>
<radialGradient id="spk" cx=".5" cy=".5" r=".5">
<stop offset="0" stop-color="#30c8f0"/><stop offset=".3" stop-color="#18b0a8"/><stop offset=".5" stop-color="#12a050"/><stop offset=".72" stop-color="#14a878"/><stop offset=".86" stop-color="#30c8e8"/><stop offset="1" stop-color="#28c0e8"/></radialGradient>
<radialGradient id="dome" cx=".42" cy=".38" r=".62">
<stop offset="0" stop-color="#d0f6ff"/><stop offset=".3" stop-color="#40ccf0"/><stop offset="1" stop-color="#1a88a8"/></radialGradient>
<radialGradient id="bdot" cx=".4" cy=".35" r=".6">
<stop offset="0" stop-color="#e0f4ff"/><stop offset=".3" stop-color="#3a70f0"/><stop offset="1" stop-color="#1a28c0"/></radialGradient>
<linearGradient id="batt" x1="0" y1="0" x2="1" y2="0">
<stop offset="0" stop-color="#20b8f0"/><stop offset=".12" stop-color="#2cd0ff"/><stop offset=".5" stop-color="#22ccff"/><stop offset="1" stop-color="#1cbcf8"/></linearGradient>
<linearGradient id="battR" x1="0" y1="0" x2="1" y2="1">
<stop offset="0" stop-color="#10a8c0"/><stop offset=".5" stop-color="#0e98d0"/><stop offset="1" stop-color="#1078e0"/></linearGradient>
<linearGradient id="panel" x1="0" y1="0" x2=".5" y2="1">
<stop offset="0" stop-color="#239038"/><stop offset=".45" stop-color="#2aa070"/><stop offset="1" stop-color="#26b0d8"/></linearGradient>
<linearGradient id="pcb" x1="0" y1="0" x2="1" y2="1">
<stop offset="0" stop-color="#1470f4"/><stop offset=".5" stop-color="#0c64ec"/><stop offset="1" stop-color="#1478f0"/></linearGradient>
<linearGradient id="rspk" x1="0" y1="0" x2="1" y2="1">
<stop offset="0" stop-color="#1a8c90"/><stop offset=".5" stop-color="#1a9cb8"/><stop offset="1" stop-color="#1a80c8"/></linearGradient>
<clipPath id="bodyclip"><path d="M356.5 372L356.5 200C356.5 178 364 161 385 160Q540 158 716 115C732 112 743 122 743 140L742.6 300C742.6 330 735 352 712 366Q560 412 413 406C385 406 358 398 356.5 372Z"/></clipPath>
</defs>
<path d="M356.5 372L356.5 200C356.5 178 364 161 385 160Q540 158 716 115C732 112 743 122 743 140L742.6 300C742.6 330 735 352 712 366Q560 412 413 406C385 406 358 398 356.5 372Z" fill="url(#mbody)" stroke="#0e2a30" stroke-width=".9"/>
<g clip-path="url(#bodyclip)">
<!-- inner face -->
<path d="M364.8 370L364.8 204C364.8 186 372 170 390 169Q540 168 714 124C726 122 735 130 735 144L734.6 300C734.6 322 730 334 716 344Q560 398 416 392C392 392 366 388 364.8 370Z" fill="url(#mface)" stroke="#0e2a30" stroke-width=".8"/>
<rect x="356" y="110" width="390" height="300" fill="url(#greenov)"/>
<!-- top rim band -->
<path d="M385 160Q540 158 716 115C726 114 734 118 738 124L714 127Q545 176 390 170C378 170 368 176 364 186C366 170 374 161 385 160z" fill="url(#mrim)" stroke="#0e2a30" stroke-width=".5"/>
<!-- left column walls -->
<path d="M372 188V384M428.2 262V392M497 170V262M489 172V262" stroke="#0e2a30" stroke-width=".7" fill="none"/>
<!-- curved slots top-left -->
<path d="M376 214C376 194 386 182 402 177L406 183C394 188 384 198 384 218z" fill="#1a6a50" stroke="#0a2428" stroke-width=".6"/>
<path d="M460 177C476 183 488 196 492 214L485 218C481 203 472 192 456 185z" fill="#1a6448" stroke="#0a2428" stroke-width=".6"/>
<path d="M375 232C375 252 382 262 394 268L390 273C377 266 369 254 369 234z" fill="#2a90c0" stroke="#0a2428" stroke-width=".6"/>
<path d="M462 262C476 258 486 250 491 238L497 242C492 256 480 266 464 270z" fill="#2080b0" stroke="#0a2428" stroke-width=".6"/>
<!-- big speaker -->
<linearGradient id="cone" x1="395" y1="180" x2="465" y2="260" gradientUnits="userSpaceOnUse"><stop offset="0" stop-color="#10a050"/><stop offset=".35" stop-color="#18a870"/><stop offset=".62" stop-color="#30c0c8"/><stop offset="1" stop-color="#50d4f8"/></linearGradient>
<circle cx="429.1" cy="218.5" r="50.2" fill="#3cc4ec" stroke="#0a2428" stroke-width=".7"/>
<circle cx="429.1" cy="218.5" r="42.5" fill="url(#cone)"/>
<circle cx="429.1" cy="218.5" r="46.5" fill="none" stroke="#0a2428" stroke-width=".45"/>
<circle cx="429.1" cy="218.5" r="42.5" fill="none" stroke="#0a2428" stroke-width=".6"/>
<circle cx="429.1" cy="218.5" r="39.5" fill="none" stroke="#0a2428" stroke-width=".35"/>
<circle cx="429.1" cy="218.5" r="26" fill="none" stroke="#0a2428" stroke-width=".6"/>
<circle cx="429.1" cy="218.5" r="15.5" fill="#1a6a70" stroke="#0a2428" stroke-width=".6"/>
<circle cx="429.1" cy="218.5" r="13.2" fill="url(#dome)"/>
<circle cx="429.1" cy="180.5" r="1.3" fill="#0a1420"/><circle cx="387.5" cy="201" r="1.3" fill="#0a1420"/><circle cx="471" cy="201" r="1.3" fill="#0a1420"/><circle cx="388" cy="246" r="1.3" fill="#0a1420"/><circle cx="471" cy="246" r="1.3" fill="#0a1420"/><circle cx="429.1" cy="266" r="1.3" fill="#0a1420"/>
<!-- tube -->
<circle cx="399.6" cy="298.4" r="22.6" fill="#2cb0e4" stroke="#0a2428" stroke-width=".6"/>
<circle cx="400" cy="300" r="17.5" fill="#1a74a8" stroke="#0a2428" stroke-width=".6"/>
<circle cx="400.2" cy="301.3" r="13.3" fill="#56b490" stroke="#061418" stroke-width="1"/>
<path d="M374 322C386 328 414 328 426 322M374 336C388 330 412 330 426 336" stroke="#0a2428" stroke-width=".6" fill="none"/>
<!-- tweeter -->
<circle cx="400.8" cy="358.8" r="27" fill="#36bcec" stroke="#0a2428" stroke-width=".6"/>
<circle cx="400.8" cy="358.8" r="22" fill="none" stroke="#0a2428" stroke-width=".45"/>
<circle cx="400.8" cy="358.8" r="16" fill="#2aa8e0" stroke="#0a2428" stroke-width=".5"/>
<circle cx="400.8" cy="358.8" r="11.5" fill="none" stroke="#0a2428" stroke-width=".45"/>
<circle cx="400.8" cy="358.8" r="8" fill="#2a90d8" stroke="#0a2428" stroke-width=".45"/>
<circle cx="400.8" cy="358.8" r="5.6" fill="url(#bdot)"/>
<circle cx="375.8" cy="359" r="1.2" fill="#0a1420"/><circle cx="425.6" cy="359" r="1.2" fill="#0a1420"/><circle cx="400.8" cy="336" r="1.2" fill="#0a1420"/><circle cx="400.8" cy="384" r="1.2" fill="#0a1420"/>
<!-- area between column and batteries -->
<path d="M428.2 262H508V276L431 280z" fill="#2a98c0" opacity=".6"/>
<!-- left battery -->
<path d="M431 284C431 280 434 279.3 438 279.3L528 276.2C532 276.2 533.3 278 533.3 282V385.4L431 389.5z" fill="url(#batt)" stroke="#0a2428" stroke-width=".6"/>
<path d="M431 284C431 280 434 279.3 438 279.3L528 276.2C532 276.2 533.3 278 533.3 282V284L431 286.5z" fill="#1a98c8" stroke="#0a2428" stroke-width=".45"/>
<path d="M442 284V389M528 282V385.6" stroke="#0a2428" stroke-width=".45"/>
<!-- center top panel -->
<path d="M500 170L652 147.6V260L500 264z" fill="url(#panel)" stroke="#0a2428" stroke-width=".6"/>
<path d="M513 165.5L652 147.6V158L513 176z" fill="#1f7a30" opacity=".75"/>
<path d="M535.1 172.4L634.3 158.6V241.3L535.1 246.8z" fill="url(#panel)" stroke="#0a2428" stroke-width=".6"/>
<path d="M513 166V262M522 174V262" stroke="#0a2428" stroke-width=".5"/>
<path d="M494.4 168L512.3 165V221.5L494.4 224z" fill="#1f9440" stroke="#06181c" stroke-width=".8"/>
<path d="M494.4 226L512.3 224V257L494.4 259z" fill="#1a9a88" stroke="#06181c" stroke-width=".8"/>
<rect x="497" y="172" width="8" height="28" fill="#c8b040" stroke="#4a3a10" stroke-width=".5"/>
<path d="M499 176h4M499 180h4M499 184h4M499 188h4M499 192h4M499 196h4" stroke="#6a5a20" stroke-width=".6"/>
<path d="M546 189H585C590 189 592 194 592 200C592 206 590 211 585 211H546C541 211 539 206 539 200C539 194 541 189 546 189z" fill="#1a4cb0" stroke="#06181c" stroke-width=".8" transform="rotate(-5 565 200)"/>
<circle cx="549" cy="201.5" r="5.6" fill="#40c4ea" stroke="#06181c" stroke-width=".8"/>
<circle cx="566" cy="200" r="5.6" fill="#40c4ea" stroke="#06181c" stroke-width=".8"/>
<circle cx="583" cy="198.5" r="5.6" fill="#40c4ea" stroke="#06181c" stroke-width=".8"/>
<path d="M600 182L630 178V208L600 212z" fill="#1f8cb0" stroke="#0a2428" stroke-width=".5"/>
<circle cx="615" cy="194.4" r="11" fill="#1a8a90" stroke="#06181c" stroke-width=".8"/>
<circle cx="614" cy="195.4" r="8.6" fill="#34bca8" stroke="#0a2428" stroke-width=".5"/>
<path d="M593 228L629 224V240L593 244z" fill="#1a60c0" stroke="#0a2428" stroke-width=".6"/>
<rect x="599" y="227.5" width="22" height="12" fill="#30b0d8" stroke="#0a2428" stroke-width=".5" transform="rotate(-5 610 233)"/>
<path d="M634.3 160L654 156V262H634.3z" fill="#2a98b0" stroke="#0a2428" stroke-width=".5"/>
<rect x="635.5" y="179" width="10" height="37.5" fill="#3ab4dc" stroke="#0a2428" stroke-width=".5"/>
<path d="M636 198h10" stroke="#0a1420" stroke-width="1.4"/>
<circle cx="569" cy="174" r="2.4" fill="#1a48c0"/><circle cx="613" cy="218" r="2.2" fill="#1a48c0"/>
<circle cx="541" cy="184" r="1.3" fill="#0a1420"/><circle cx="600" cy="176" r="1.3" fill="#0a1420"/><circle cx="541" cy="241" r="1.3" fill="#0a1420"/><circle cx="628" cy="234" r="1.3" fill="#0a1420"/><circle cx="590" cy="238" r="1.3" fill="#0a1420"/>
<path d="M560 160C566 190 548 226 552 252" stroke="#1a3ad0" stroke-width="1.2" fill="none" opacity=".7"/>
<!-- top holes -->
<ellipse cx="530" cy="156" rx="7.6" ry="2.3" fill="#0e4434" stroke="#061818" stroke-width=".6"/>
<ellipse cx="563" cy="152.2" rx="7.6" ry="2.3" fill="#0e4434" stroke="#061818" stroke-width=".6"/>
<ellipse cx="593" cy="147.6" rx="7.6" ry="2.3" fill="#0e4434" stroke="#061818" stroke-width=".6"/>
<ellipse cx="623" cy="142.6" rx="7.6" ry="2.3" fill="#0e4434" stroke="#061818" stroke-width=".6"/>
<ellipse cx="530" cy="156" rx="3" ry="1" fill="#2a9a70"/><ellipse cx="563" cy="152.2" rx="3" ry="1" fill="#2a9a70"/><ellipse cx="593" cy="147.6" rx="3" ry="1" fill="#2a9a70"/><ellipse cx="623" cy="142.6" rx="3" ry="1" fill="#2a9a70"/>
<!-- separator band under panel -->
<path d="M500 262L652 258V264L500 268z" fill="#126070" stroke="#0a2428" stroke-width=".4"/>
<!-- pcb frame -->
<path d="M533 250H616V384H533z" fill="#0a6ab8" stroke="#0a2428" stroke-width=".6"/>
<path d="M536 252V382M612 252V382" stroke="#0a2428" stroke-width=".45"/>
<rect x="539" y="256" width="67.5" height="116" fill="url(#pcb)" stroke="#081838" stroke-width=".8"/>
<path d="M606.5 252H620V384H606.5z" fill="#12a090" opacity=".6"/>
<rect x="547" y="258" width="54" height="4.6" fill="#10204a" opacity=".8"/>
<path d="M548 260.3h52" stroke="#9ab0e8" stroke-width="1" stroke-dasharray=".9 .9"/>
<rect x="548.6" y="270" width="18.5" height="14.3" fill="#3a80f0" stroke="#040818" stroke-width=".9"/><rect x="556" y="274" width="2.2" height="5" fill="#0a1430"/>
<rect x="580" y="271.4" width="20" height="21.5" fill="#1a50c8" stroke="#040818" stroke-width=".9"/><rect x="584" y="275" width="12" height="14" fill="#2a6ae0" stroke="#0a1838" stroke-width=".5"/><rect x="588" y="281" width="4" height="2" fill="#0a1430"/>
<path d="M581 264.5h19M581 267h19" stroke="#081020" stroke-width="1.3" stroke-dasharray="1.2 .7"/>
<path d="M548 294.5h19M548 298h19" stroke="#081020" stroke-width="1.4" stroke-dasharray="1.3 .7"/>
<rect x="545.7" y="305.7" width="8.6" height="11.4" fill="#2a6ae0" stroke="#040818" stroke-width=".8"/>
<path d="M556 307h6M556 310h6M556 313h6M556 316h6" stroke="#081020" stroke-width=".9" stroke-dasharray="1 .6"/>
<rect x="584.3" y="300" width="14.3" height="15.7" fill="#1a50c8" stroke="#040818" stroke-width=".9"/><rect x="589" y="305" width="4" height="3" fill="#0a1430"/>
<path d="M577 303h5M577 306h5M577 309h5M577 312h5" stroke="#081020" stroke-width=".9" stroke-dasharray="1 .6"/>
<rect x="544.3" y="322.9" width="24.3" height="15.7" rx="2" fill="#3a7ef0" stroke="#040818" stroke-width=".9"/><path d="M548 332h8M550 334h10" stroke="#0a1838" stroke-width=".6"/>
<path d="M575 327h15M575 330h15" stroke="#081020" stroke-width="1.2" stroke-dasharray="1.1 .7"/>
<path d="M598 328c3 0 3 2 0 2c3 0 3 2 0 2c3 0 3 2 0 2c3 0 3 2 0 2c3 0 3 2 0 2" fill="none" stroke="#081020" stroke-width=".8"/>
<path d="M546 342.5h21M546 345.5h21M546 355.5h21M546 358.5h21" stroke="#081020" stroke-width="1.3" stroke-dasharray="1.2 .7"/>
<circle cx="577.1" cy="351.4" r="4.4" fill="#1a40a0" stroke="#040818" stroke-width=".9"/><circle cx="585.7" cy="351" r="4.4" fill="#1a40a0" stroke="#040818" stroke-width=".9"/><circle cx="594.3" cy="350.4" r="4.4" fill="#1a40a0" stroke="#040818" stroke-width=".9"/>
<path d="M575.5 349.5l3 3.4M584 349l3 3.4M592.6 348.5l3 3.4" stroke="#8aa8e8" stroke-width=".6"/>
<rect x="551.4" y="362.9" width="42.9" height="6" fill="#1a3a90" stroke="#040818" stroke-width=".7"/>
<path d="M553 365.9h40" stroke="#b0c4f0" stroke-width="1.6" stroke-dasharray="2 2.4"/>
<circle cx="546.5" cy="366" r="1.3" fill="#040818"/><circle cx="599" cy="363" r="1.3" fill="#040818"/><circle cx="546" cy="260" r="1.1" fill="#040818"/>
<path d="M552 290C566 300 578 296 590 310M570 335C580 330 592 340 602 336" stroke="#0a30c0" stroke-width="1" fill="none" opacity=".7"/>
<!-- right battery -->
<path d="M622 270C622 265 625 263.4 630 263.4L700.7 260V355.5L634 370.5C626 372 622 372 622 368z" fill="url(#battR)" stroke="#0a2428" stroke-width=".6"/>
<path d="M622 272C622 266 627 263.7 634 263.7H645V368.5L634 371C626 372 622 372 622 368z" fill="#28b8ec" stroke="#0a2428" stroke-width=".5"/>
<path d="M626 270V368" stroke="#58d8ff" stroke-width="2" opacity=".5"/>
<path d="M700.7 260L705 257V352L700.7 355.5" fill="#1a80c8" stroke="#0a2428" stroke-width=".45"/>
<path d="M616 250V384M620 252V384" stroke="#0a2428" stroke-width=".45"/>
<!-- right column -->
<path d="M654 158L716 124L735 130V346L705 360V158z" fill="#20a0b8" opacity=".35"/>
<path d="M654 150V262" stroke="#0a1420" stroke-width="1.6"/><path d="M656 155L662 152V262H656z" fill="#1a70b0" opacity=".6"/>
<path d="M662 140L716 126L736 132V236L662 250z" fill="#1c98b0" stroke="#0a2428" stroke-width=".5"/>
<ellipse cx="704" cy="182" rx="32" ry="47" fill="url(#rspk)" stroke="#06181c" stroke-width="1.1"/>
<ellipse cx="704" cy="182" rx="28.5" ry="42.5" fill="none" stroke="#0a2428" stroke-width=".5"/>
<ellipse cx="704" cy="182" rx="26" ry="39" fill="none" stroke="#0a2428" stroke-width=".6"/>
<ellipse cx="702" cy="182" rx="21" ry="32" fill="#1a90b0" stroke="#0a2428" stroke-width=".6"/>
<ellipse cx="700" cy="181" rx="9.5" ry="14" fill="#147890" stroke="#0a2428" stroke-width=".6"/>
<ellipse cx="699.5" cy="181" rx="7" ry="11" fill="#22a8c8" stroke="#0a2428" stroke-width=".4"/>
<ellipse cx="698.5" cy="179.5" rx="3" ry="5" fill="#60d0f0" opacity=".8"/>
<path d="M680 148C672 160 670 180 674 200M676 214C680 224 688 230 696 232" stroke="#1a40d0" stroke-width="1.4" fill="none" opacity=".7"/>
<circle cx="709" cy="135.6" r="1.3" fill="#0a1420"/><circle cx="732" cy="154" r="1.3" fill="#0a1420"/><circle cx="732" cy="210" r="1.3" fill="#0a1420"/><circle cx="708" cy="228" r="1.3" fill="#0a1420"/>
<path d="M716 118C728 120 736 128 736 140L728 142C728 132 724 126 714 124z" fill="#2a8898" stroke="#0a2428" stroke-width=".5"/>
<ellipse cx="718" cy="249" rx="11" ry="12" fill="#2a98d8" stroke="#0a2428" stroke-width=".6"/>
<ellipse cx="716" cy="248" rx="7" ry="8" fill="#34b8ec" stroke="#0a2428" stroke-width=".6"/>
<path d="M704 284L736 278V330L704 346z" fill="#1478d0" stroke="#0a2428" stroke-width=".5"/>
<ellipse cx="721.3" cy="309.5" rx="16.5" ry="23" fill="#1a70e0" stroke="#06181c" stroke-width=".8"/>
<ellipse cx="721.3" cy="309.5" rx="13" ry="18.5" fill="#2a8af0" stroke="#0a2428" stroke-width=".5"/>
<ellipse cx="721.3" cy="309.5" rx="9" ry="13" fill="#1a68e0" stroke="#0a2428" stroke-width=".45"/>
<ellipse cx="720.5" cy="309" rx="4.6" ry="7" fill="url(#bdot)"/>
<path d="M706 336L722 332V342L708 346z" fill="#1a60d0" stroke="#0a2428" stroke-width=".45"/>
<!-- field streaks -->
<path d="M473.5 292C490 300 510 318 527 325M431 372C450 372 470 374 490 382C505 388 518 394 530 398M628 290C650 300 675 296 700 288M650 370C662 336 690 322 704 300M366 250C378 268 384 296 372 326M395 393C430 386 470 396 520 402M640 392C660 376 690 364 734 352M472 172C482 188 498 194 512 202M600 262C610 280 620 290 622 300" fill="none" stroke="#1a40e0" stroke-width="3.2" opacity=".25"/>
<path d="M473.5 292C490 300 510 318 527 325M431 372C450 372 470 374 490 382C505 388 518 394 530 398M628 290C650 300 675 296 700 288M650 370C662 336 690 322 704 300M366 250C378 268 384 296 372 326M395 393C430 386 470 396 520 402M640 392C660 376 690 364 734 352M472 172C482 188 498 194 512 202M600 262C610 280 620 290 622 300" fill="none" stroke="#1030d8" stroke-width="1.3" opacity=".85"/>
<!-- bottom lip -->
<path d="M416 392Q490 388 550 377T700 352Q725 346 740 334L760 320V420H380V392z" fill="#0e90b8"/>
<path d="M416 399Q490 395 550 384T700 359Q725 353 740 341L760 330V420H380V399z" fill="#14b0e8"/>
<path d="M416 399Q490 395 550 384T700 359Q725 353 740 341" fill="none" stroke="#0a3a50" stroke-width=".5"/>
<path d="M416 392Q490 388 550 377T700 352Q725 346 740 334" fill="none" stroke="#0a2428" stroke-width="1"/>
<path d="M394 389.5H430" stroke="#0a2428" stroke-width=".8"/>
</g>
<!-- play button -->
<circle cx="475.1" cy="266.8" r="22.3" fill="rgba(255,255,255,.05)" stroke="#ffffff" stroke-width="3.6"/>
<path d="M467.2 254.2L467.2 277.8L487.7 266z" fill="#ffffff"/>
</svg>

<svg class="a" style="left:0;top:0" width="948" height="508" viewBox="0 0 948 508"><path d="M165.8 84.3l3.8 3.8M169.6 84.3l-3.8 3.8M673.4 450.6l3.6 3.6M677 450.6l-3.6 3.6M944.6 450.6l3.6 3.6M948.2 450.6l-3.6 3.6" stroke="#1a1a1a" stroke-width="1.1"/></svg>
<div class="t" style="left:206.80px;top:13.82px;font-size:6.541px;color:#5a5a5a;transform:scaleX(0.7967);-webkit-text-stroke:0.03px #5a5a5a">RESULT TOOLS</div>
<div class="t" style="left:211.60px;top:25.32px;font-size:6.541px;color:#5a5a5a;transform:scaleX(0.8885);-webkit-text-stroke:0.03px #5a5a5a">2D/3D Plot</div>
<div class="t" style="left:6.75px;top:25.52px;font-size:6.541px;color:#ffffff;transform:scaleX(0.8587);-webkit-text-stroke:0.03px #ffffff">File</div>
<div class="t" style="left:31.00px;top:25.52px;font-size:6.541px;color:#ffffff;transform:scaleX(0.9056);-webkit-text-stroke:0.03px #ffffff">Home</div>
<div class="t" style="left:57.00px;top:25.52px;font-size:6.541px;color:#ffffff;transform:scaleX(0.9381);-webkit-text-stroke:0.03px #ffffff">Modeling</div>
<div class="t" style="left:92.40px;top:25.52px;font-size:6.541px;color:#ffffff;transform:scaleX(0.9267);-webkit-text-stroke:0.03px #ffffff">Simulation</div>
<div class="t" style="left:130.80px;top:25.52px;font-size:6.541px;color:#ffffff;transform:scaleX(0.8778);-webkit-text-stroke:0.03px #ffffff">Post-Processing</div>
<div class="t" style="left:182.50px;top:25.52px;font-size:6.541px;color:#ffffff;transform:scaleX(0.8535);-webkit-text-stroke:0.03px #ffffff">View</div>
<div class="t" style="left:380.00px;top:9.85px;font-size:7.267px;color:#ffffff;transform:scaleX(0.7692);-webkit-text-stroke:0.03px #ffffff">Beamy_v2_CNC_sixPrintedLoops:SP1_innerPair - CST STUDIO SUITE - [In-house License]</div>
<div class="t" style="left:4.90px;top:55.12px;font-size:6.541px;color:#3b3b3b;transform:scaleX(0.8755);-webkit-text-stroke:0.03px #3b3b3b">Properties</div>
<div class="t" style="left:38.30px;top:55.12px;font-size:6.541px;color:#a9a9a9;transform:scaleX(0.8961);-webkit-text-stroke:0.03px #a9a9a9">Update</div>
<div class="t" style="left:38.80px;top:62.02px;font-size:6.541px;color:#a9a9a9;transform:scaleX(0.7978);-webkit-text-stroke:0.03px #a9a9a9">Results</div>
<div class="t" style="left:80.00px;top:55.12px;font-size:6.541px;color:#3b3b3b;transform:scaleX(0.9629);-webkit-text-stroke:0.03px #3b3b3b">All</div>
<div class="t" style="left:69.30px;top:62.12px;font-size:6.541px;color:#3b3b3b;transform:scaleX(0.8537);-webkit-text-stroke:0.03px #3b3b3b">Transparent</div>
<div class="t" style="left:33.60px;top:72.12px;font-size:6.541px;color:#4a4a4a;transform:scaleX(0.8928);-webkit-text-stroke:0.03px #4a4a4a">Plot Properties</div>
<div class="t" style="left:110.20px;top:38.92px;font-size:6.541px;color:#3b3b3b;transform:scaleX(0.9325);-webkit-text-stroke:0.03px #3b3b3b">Contour</div>
<div class="t" style="left:110.20px;top:50.32px;font-size:6.541px;color:#3b3b3b;transform:scaleX(0.8695);-webkit-text-stroke:0.03px #3b3b3b">Abs</div>
<div class="t" style="left:162.00px;top:54.92px;font-size:6.541px;color:#555;transform:scaleX(0.9085);-webkit-text-stroke:0.03px #555">Animate</div>
<div class="t" style="left:164.60px;top:62.12px;font-size:6.541px;color:#555;transform:scaleX(0.8540);-webkit-text-stroke:0.03px #555">Fields</div>
<div class="t" style="left:187.10px;top:38.72px;font-size:6.541px;color:#555;transform:scaleX(0.8152);-webkit-text-stroke:0.03px #555">Phase:</div>
<div class="t" style="left:187.10px;top:50.62px;font-size:6.541px;color:#808080;transform:scaleX(0.9125);-webkit-text-stroke:0.03px #808080">Time:</div>
<div class="t" style="left:207.20px;top:38.72px;font-size:6.541px;color:#333;transform:scaleX(0.7898);-webkit-text-stroke:0.03px #333">123.75</div>
<div class="t" style="left:197.70px;top:61.62px;font-size:6.541px;color:#3b3b3b;transform:scaleX(0.8858);-webkit-text-stroke:0.03px #3b3b3b">Instantaneous</div>
<div class="t" style="left:249.60px;top:38.72px;font-size:6.541px;color:#3b3b3b;transform:scaleX(0.8304);-webkit-text-stroke:0.03px #3b3b3b">Phase</div>
<div class="t" style="left:249.60px;top:50.22px;font-size:6.541px;color:#3b3b3b;transform:scaleX(0.8028);-webkit-text-stroke:0.03px #3b3b3b">Real</div>
<div class="t" style="left:249.60px;top:61.62px;font-size:6.541px;color:#3b3b3b;transform:scaleX(0.8741);-webkit-text-stroke:0.03px #3b3b3b">Imag.</div>
<div class="t" style="left:279.00px;top:38.72px;font-size:6.541px;color:#3b3b3b;transform:scaleX(0.9455);-webkit-text-stroke:0.03px #3b3b3b">Maximum</div>
<div class="t" style="left:279.00px;top:50.22px;font-size:6.541px;color:#3b3b3b;transform:scaleX(0.8786);-webkit-text-stroke:0.03px #3b3b3b">Average</div>
<div class="t" style="left:279.00px;top:61.62px;font-size:6.541px;color:#3b3b3b;transform:scaleX(0.8119);-webkit-text-stroke:0.03px #3b3b3b">RMS</div>
<div class="t" style="left:312.00px;top:55.02px;font-size:6.541px;color:#3b3b3b;transform:scaleX(0.8999);-webkit-text-stroke:0.03px #3b3b3b">dB</div>
<div class="t" style="left:203.70px;top:72.32px;font-size:6.541px;color:#4a4a4a;transform:scaleX(0.8877);-webkit-text-stroke:0.03px #4a4a4a">Plot Type</div>
<div class="t" style="left:328.70px;top:55.02px;font-size:6.541px;color:#3b3b3b;transform:scaleX(0.8930);-webkit-text-stroke:0.03px #3b3b3b">Fields on</div>
<div class="t" style="left:331.90px;top:62.12px;font-size:6.541px;color:#3b3b3b;transform:scaleX(0.8787);-webkit-text-stroke:0.03px #3b3b3b">Plane</div>
<div class="t" style="left:355.60px;top:55.02px;font-size:6.541px;color:#3b3b3b;transform:scaleX(0.9361);-webkit-text-stroke:0.03px #3b3b3b">Cutting</div>
<div class="t" style="left:356.70px;top:62.12px;font-size:6.541px;color:#3b3b3b;transform:scaleX(0.8309);-webkit-text-stroke:0.03px #3b3b3b">Plane</div>
<div class="t" style="left:378.20px;top:38.72px;font-size:6.541px;color:#555;transform:scaleX(0.9128);-webkit-text-stroke:0.03px #555">Normal:</div>
<div class="t" style="left:378.20px;top:50.32px;font-size:6.541px;color:#555;transform:scaleX(0.9089);-webkit-text-stroke:0.03px #555">Position:</div>
<div class="t" style="left:404.70px;top:38.92px;font-size:6.541px;color:#3b3b3b;transform:scaleX(0.8022);-webkit-text-stroke:0.03px #3b3b3b">X</div>
<div class="t" style="left:404.20px;top:50.32px;font-size:6.541px;color:#3b3b3b;transform:scaleX(0.8795);-webkit-text-stroke:0.03px #3b3b3b">0</div>
<div class="t" style="left:362.40px;top:72.32px;font-size:6.541px;color:#4a4a4a;transform:scaleX(0.8765);-webkit-text-stroke:0.03px #4a4a4a">Sectional View</div>
<div class="t" style="left:445.30px;top:55.02px;font-size:6.541px;color:#3b3b3b;transform:scaleX(0.8713);-webkit-text-stroke:0.03px #3b3b3b">Smart</div>
<div class="t" style="left:443.70px;top:62.12px;font-size:6.541px;color:#3b3b3b;transform:scaleX(0.8717);-webkit-text-stroke:0.03px #3b3b3b">Scaling</div>
<div class="t" style="left:473.90px;top:55.02px;font-size:6.541px;color:#3b3b3b;transform:scaleX(0.8369);-webkit-text-stroke:0.03px #3b3b3b">Reset</div>
<div class="t" style="left:470.30px;top:62.12px;font-size:6.541px;color:#3b3b3b;transform:scaleX(0.8857);-webkit-text-stroke:0.03px #3b3b3b">Scaling</div>
<div class="t" style="left:502.70px;top:55.02px;font-size:6.541px;color:#3b3b3b;transform:scaleX(0.8484);-webkit-text-stroke:0.03px #3b3b3b">Special</div>
<div class="t" style="left:498.00px;top:62.12px;font-size:6.541px;color:#3b3b3b;transform:scaleX(0.9157);-webkit-text-stroke:0.03px #3b3b3b">Clamping</div>
<div class="t" style="left:530.90px;top:38.72px;font-size:6.541px;color:#555;transform:scaleX(0.9468);-webkit-text-stroke:0.03px #555">Min:</div>
<div class="t" style="left:530.90px;top:50.32px;font-size:6.541px;color:#555;transform:scaleX(0.8255);-webkit-text-stroke:0.03px #555">Max:</div>
<div class="t" style="left:547.00px;top:38.72px;font-size:6.541px;color:#3b3b3b;transform:scaleX(0.8795);-webkit-text-stroke:0.03px #3b3b3b">0</div>
<div class="t" style="left:546.70px;top:50.32px;font-size:6.541px;color:#3b3b3b;transform:scaleX(0.8163);-webkit-text-stroke:0.03px #3b3b3b">67896.2</div>
<div class="t" style="left:541.50px;top:61.92px;font-size:6.541px;color:#3b3b3b;transform:scaleX(0.8525);-webkit-text-stroke:0.03px #3b3b3b">Log Scale</div>
<div class="t" style="left:496.00px;top:72.32px;font-size:6.541px;color:#4a4a4a;transform:scaleX(0.8827);-webkit-text-stroke:0.03px #4a4a4a">Color Ramp</div>
<div class="t" style="left:598.60px;top:54.62px;font-size:6.541px;color:#3b3b3b;transform:scaleX(0.8900);-webkit-text-stroke:0.03px #3b3b3b">Result</div>
<div class="t" style="left:594.00px;top:62.32px;font-size:6.541px;color:#3b3b3b;transform:scaleX(0.8789);-webkit-text-stroke:0.03px #3b3b3b">Templates</div>
<div class="t" style="left:636.90px;top:39.12px;font-size:6.541px;color:#3b3b3b;transform:scaleX(0.8706);-webkit-text-stroke:0.03px #3b3b3b">1D Field Plot</div>
<div class="t" style="left:636.90px;top:50.12px;font-size:6.541px;color:#3b3b3b;transform:scaleX(0.8957);-webkit-text-stroke:0.03px #3b3b3b">Field Calculator</div>
<div class="t" style="left:694.80px;top:39.12px;font-size:6.541px;color:#3b3b3b;transform:scaleX(0.8650);-webkit-text-stroke:0.03px #3b3b3b">Field at Cursor</div>
<div class="t" style="left:694.80px;top:50.32px;font-size:6.541px;color:#b4b4b4;transform:scaleX(0.8504);-webkit-text-stroke:0.03px #b4b4b4">Field on Face</div>
<div class="t" style="left:694.80px;top:61.92px;font-size:6.541px;color:#b4b4b4;transform:scaleX(0.8722);-webkit-text-stroke:0.03px #b4b4b4">Field on Curve</div>
<div class="t" style="left:654.30px;top:72.02px;font-size:6.541px;color:#4a4a4a;transform:scaleX(0.9038);-webkit-text-stroke:0.03px #4a4a4a">Tools</div>
<div class="t" style="left:-0.60px;top:83.62px;font-size:6.541px;color:#333;transform:scaleX(0.8186);-webkit-text-stroke:0.03px #333">Navigation Tree</div>
<div class="t" style="left:20.60px;top:92.02px;font-size:6.541px;color:#333;transform:scaleX(0.8200);-webkit-text-stroke:0.03px #333">Components</div>
<div class="t" style="left:30.00px;top:99.96px;font-size:6.541px;color:#333;transform:scaleX(0.8200);-webkit-text-stroke:0.03px #333">Beamy2_CNC_v2_noHL_1</div>
<div class="t" style="left:39.40px;top:107.90px;font-size:6.541px;color:#333;transform:scaleX(0.8200);-webkit-text-stroke:0.03px #333">Root_Beamy2_DesignA.1</div>
<div class="t" style="left:48.80px;top:115.84px;font-size:6.541px;color:#333;transform:scaleX(0.8200);-webkit-text-stroke:0.03px #333">Produit physique00014679.1</div>
<div class="t" style="left:48.80px;top:123.78px;font-size:6.541px;color:#333;transform:scaleX(0.8200);-webkit-text-stroke:0.03px #333">Produit physique00014716.1</div>
<div class="t" style="left:48.80px;top:131.72px;font-size:6.541px;color:#333;transform:scaleX(0.8200);-webkit-text-stroke:0.03px #333">Produit physique00014728.1</div>
<div class="t" style="left:30.00px;top:139.66px;font-size:6.541px;color:#333;transform:scaleX(0.8200);-webkit-text-stroke:0.03px #333">PrintedLoop_WLAN_reduced_1</div>
<div class="t" style="left:30.00px;top:147.60px;font-size:6.541px;color:#333;transform:scaleX(0.8200);-webkit-text-stroke:0.03px #333">PrintedLoop_WLAN_reduced_2</div>
<div class="t" style="left:20.60px;top:155.54px;font-size:6.541px;color:#333;transform:scaleX(0.8200);-webkit-text-stroke:0.03px #333">Groups</div>
<div class="t" style="left:20.60px;top:163.48px;font-size:6.541px;color:#333;transform:scaleX(0.8200);-webkit-text-stroke:0.03px #333">Materials</div>
<div class="t" style="left:20.60px;top:171.42px;font-size:6.541px;color:#333;transform:scaleX(0.8200);-webkit-text-stroke:0.03px #333">Faces</div>
<div class="t" style="left:20.60px;top:179.36px;font-size:6.541px;color:#333;transform:scaleX(0.8200);-webkit-text-stroke:0.03px #333">Curves</div>
<div class="t" style="left:20.60px;top:187.30px;font-size:6.541px;color:#333;transform:scaleX(0.8200);-webkit-text-stroke:0.03px #333">WCS</div>
<div class="t" style="left:20.60px;top:195.24px;font-size:6.541px;color:#333;transform:scaleX(0.8200);-webkit-text-stroke:0.03px #333">Anchor Points</div>
<div class="t" style="left:20.60px;top:203.18px;font-size:6.541px;color:#333;transform:scaleX(0.8200);-webkit-text-stroke:0.03px #333">Wires</div>
<div class="t" style="left:20.60px;top:211.12px;font-size:6.541px;color:#333;transform:scaleX(0.8200);-webkit-text-stroke:0.03px #333">Voxel Data</div>
<div class="t" style="left:20.60px;top:219.06px;font-size:6.541px;color:#333;transform:scaleX(0.8200);-webkit-text-stroke:0.03px #333">Dimensions</div>
<div class="t" style="left:20.60px;top:227.00px;font-size:6.541px;color:#333;transform:scaleX(0.8200);-webkit-text-stroke:0.03px #333">Lumped Elements</div>
<div class="t" style="left:20.60px;top:234.94px;font-size:6.541px;color:#333;transform:scaleX(0.8200);-webkit-text-stroke:0.03px #333">Plane Wave</div>
<div class="t" style="left:20.60px;top:242.88px;font-size:6.541px;color:#333;transform:scaleX(0.8200);-webkit-text-stroke:0.03px #333">Farfield Sources</div>
<div class="t" style="left:20.60px;top:250.82px;font-size:6.541px;color:#333;transform:scaleX(0.8200);-webkit-text-stroke:0.03px #333">Field Sources</div>
<div class="t" style="left:20.60px;top:258.76px;font-size:6.541px;color:#333;transform:scaleX(0.8200);-webkit-text-stroke:0.03px #333">Ports</div>
<div class="t" style="left:20.60px;top:266.70px;font-size:6.541px;color:#333;transform:scaleX(0.8200);-webkit-text-stroke:0.03px #333">Excitation Signals</div>
<div class="t" style="left:20.60px;top:274.64px;font-size:6.541px;color:#333;transform:scaleX(0.8200);-webkit-text-stroke:0.03px #333">Field Monitors</div>
<div class="t" style="left:20.60px;top:282.58px;font-size:6.541px;color:#333;transform:scaleX(0.8200);-webkit-text-stroke:0.03px #333">Voltage and Current Monitors</div>
<div class="t" style="left:20.60px;top:290.52px;font-size:6.541px;color:#333;transform:scaleX(0.8200);-webkit-text-stroke:0.03px #333">Probes</div>
<div class="t" style="left:20.60px;top:298.46px;font-size:6.541px;color:#333;transform:scaleX(0.8200);-webkit-text-stroke:0.03px #333">Mesh</div>
<div class="t" style="left:20.60px;top:306.40px;font-size:6.541px;color:#333;transform:scaleX(0.8200);-webkit-text-stroke:0.03px #333">1D Results</div>
<div class="t" style="left:30.00px;top:314.34px;font-size:6.541px;color:#333;transform:scaleX(0.8200);-webkit-text-stroke:0.03px #333">Port signals</div>
<div class="t" style="left:30.00px;top:322.28px;font-size:6.541px;color:#333;transform:scaleX(0.8200);-webkit-text-stroke:0.03px #333">S-Parameters</div>
<div class="t" style="left:30.00px;top:330.22px;font-size:6.541px;color:#333;transform:scaleX(0.8200);-webkit-text-stroke:0.03px #333">Reference Impedance</div>
<div class="t" style="left:30.00px;top:338.16px;font-size:6.541px;color:#333;transform:scaleX(0.8200);-webkit-text-stroke:0.03px #333">Balance</div>
<div class="t" style="left:30.00px;top:346.10px;font-size:6.541px;color:#333;transform:scaleX(0.8200);-webkit-text-stroke:0.03px #333">Power</div>
<div class="t" style="left:30.00px;top:354.04px;font-size:6.541px;color:#333;transform:scaleX(0.8200);-webkit-text-stroke:0.03px #333">Energy</div>
<div class="t" style="left:30.00px;top:361.98px;font-size:6.541px;color:#333;transform:scaleX(0.8200);-webkit-text-stroke:0.03px #333">Discrete Ports</div>
<div class="t" style="left:30.00px;top:369.92px;font-size:6.541px;color:#333;transform:scaleX(0.8200);-webkit-text-stroke:0.03px #333">Materials</div>
<div class="t" style="left:30.00px;top:377.86px;font-size:6.541px;color:#333;transform:scaleX(0.8200);-webkit-text-stroke:0.03px #333">Convergence</div>
<div class="t" style="left:30.00px;top:385.80px;font-size:6.541px;color:#333;transform:scaleX(0.8200);-webkit-text-stroke:0.03px #333">Efficiencies</div>
<div class="t" style="left:30.00px;top:393.74px;font-size:6.541px;color:#333;transform:scaleX(0.8200);-webkit-text-stroke:0.03px #333">VSWR</div>
<div class="t" style="left:30.00px;top:401.68px;font-size:6.541px;color:#333;transform:scaleX(0.8200);-webkit-text-stroke:0.03px #333">Y Matrix</div>
<div class="t" style="left:30.00px;top:409.62px;font-size:6.541px;color:#333;transform:scaleX(0.8200);-webkit-text-stroke:0.03px #333">Z Matrix</div>
<div class="t" style="left:30.00px;top:417.56px;font-size:6.541px;color:#333;transform:scaleX(0.8200);-webkit-text-stroke:0.03px #333">Y Matrix (AR)</div>
<div class="t" style="left:30.00px;top:425.50px;font-size:6.541px;color:#333;transform:scaleX(0.8200);-webkit-text-stroke:0.03px #333">Z Matrix (AR)</div>
<div class="t" style="left:20.60px;top:433.44px;font-size:6.541px;color:#333;transform:scaleX(0.8200);-webkit-text-stroke:0.03px #333">2D/3D Results</div>
<div class="t" style="left:30.00px;top:441.38px;font-size:6.541px;color:#333;transform:scaleX(0.8200);-webkit-text-stroke:0.03px #333">E-Field</div>
<div class="t" style="left:39.40px;top:449.32px;font-size:6.541px;color:#333;transform:scaleX(0.8200);-webkit-text-stroke:0.03px #333">e-field (f=2.45) [1]</div>
<div class="t" style="left:39.40px;top:457.26px;font-size:6.541px;color:#333;transform:scaleX(0.8200);-webkit-text-stroke:0.03px #333">e-field (f=2.45) [2]</div>
<div class="t" style="left:39.40px;top:465.20px;font-size:6.541px;color:#333;transform:scaleX(0.8200);-webkit-text-stroke:0.03px #333">e-field (f=2.45) [BothAntennasOn]</div>
<div class="t" style="left:30.00px;top:473.14px;font-size:6.541px;color:#333;transform:scaleX(0.8200);-webkit-text-stroke:0.03px #333">H-Field</div>
<div class="t" style="left:30.00px;top:481.08px;font-size:6.541px;color:#333;transform:scaleX(0.8200);-webkit-text-stroke:0.03px #333">Surface Current</div>
<div class="t" style="left:20.60px;top:489.02px;font-size:6.541px;color:#333;transform:scaleX(0.8200);-webkit-text-stroke:0.03px #333">Farfields</div>
<div class="t" style="left:20.60px;top:496.96px;font-size:6.541px;color:#333;transform:scaleX(0.8200);-webkit-text-stroke:0.03px #333">Tables</div>
<div class="t" style="left:190.00px;top:87.12px;font-size:6.541px;color:#333;transform:scaleX(0.7874);-webkit-text-stroke:0.03px #333">Beamy_v2_CNC_sixPrintedLoops *</div>
<div class="t" style="left:302.50px;top:87.12px;font-size:6.541px;color:#333;transform:scaleX(0.7800);-webkit-text-stroke:0.03px #333">SP1_innerPair *</div>
<div class="t" style="left:179.90px;top:102.39px;font-size:6.395px;color:#444;transform:scaleX(1.0531);-webkit-text-stroke:0.12px #444">Press ESC to stop animation</div>
<div class="t" style="left:907.10px;top:99.73px;font-size:5.523px;color:#ffffff;transform:scaleX(1.1429);font-weight:700;-webkit-text-stroke:0.03px #ffffff">V/m (log)</div>
<div class="t" style="left:912.68px;top:110.14px;font-size:6.105px;color:#333;transform:scaleX(0.8200);-webkit-text-stroke:0.03px #333">67896</div>
<div class="t" style="left:912.68px;top:129.64px;font-size:6.105px;color:#333;transform:scaleX(0.8200);-webkit-text-stroke:0.03px #333">10000</div>
<div class="t" style="left:915.46px;top:153.14px;font-size:6.105px;color:#333;transform:scaleX(0.8200);-webkit-text-stroke:0.03px #333">1000</div>
<div class="t" style="left:918.25px;top:176.14px;font-size:6.105px;color:#333;transform:scaleX(0.8200);-webkit-text-stroke:0.03px #333">100</div>
<div class="t" style="left:921.03px;top:198.94px;font-size:6.105px;color:#333;transform:scaleX(0.8200);-webkit-text-stroke:0.03px #333">10</div>
<div class="t" style="left:923.82px;top:220.14px;font-size:6.105px;color:#333;transform:scaleX(0.8200);-webkit-text-stroke:0.03px #333">1</div>
<div class="t" style="left:923.82px;top:236.14px;font-size:6.105px;color:#333;transform:scaleX(0.8200);-webkit-text-stroke:0.03px #333">0</div>
<div class="t" style="left:195.40px;top:440.32px;font-size:6.541px;color:#333;transform:scaleX(0.7654);-webkit-text-stroke:0.03px #333">3D</div>
<div class="t" style="left:236.00px;top:440.32px;font-size:6.541px;color:#333;transform:scaleX(0.7958);-webkit-text-stroke:0.03px #333">Schematic</div>
<div class="t" style="left:279.80px;top:440.32px;font-size:6.541px;color:#333;transform:scaleX(0.7876);-webkit-text-stroke:0.03px #333">1D Results\S-Parameters</div>
<div class="t" style="left:360.50px;top:440.32px;font-size:6.541px;color:#333;transform:scaleX(0.7958);-webkit-text-stroke:0.03px #333">S-Parameters of SP1_innerPair</div>
<div class="t" style="left:175.20px;top:450.72px;font-size:6.541px;color:#333;transform:scaleX(0.8182);-webkit-text-stroke:0.03px #333">Parameter List</div>
<div class="t" style="left:188.60px;top:461.12px;font-size:6.541px;color:#333;transform:scaleX(0.9228);-webkit-text-stroke:0.03px #333">Name</div>
<div class="t" style="left:286.50px;top:461.12px;font-size:6.541px;color:#333;transform:scaleX(0.8592);-webkit-text-stroke:0.03px #333">Expression</div>
<div class="t" style="left:385.50px;top:461.12px;font-size:6.541px;color:#333;transform:scaleX(0.8496);-webkit-text-stroke:0.03px #333">Value</div>
<div class="t" style="left:459.70px;top:461.12px;font-size:6.541px;color:#333;transform:scaleX(0.8986);-webkit-text-stroke:0.03px #333">Description</div>
<div class="t" style="left:593.20px;top:461.12px;font-size:6.541px;color:#333;transform:scaleX(0.8745);-webkit-text-stroke:0.03px #333">Type</div>
<div class="t" style="left:188.60px;top:470.72px;font-size:6.541px;color:#333;transform:scaleX(0.7285);-webkit-text-stroke:0.03px #333">a1</div>
<div class="t" style="left:188.60px;top:479.72px;font-size:6.541px;color:#333;transform:scaleX(0.7560);-webkit-text-stroke:0.03px #333">a2</div>
<div class="t" style="left:282.30px;top:470.72px;font-size:6.541px;color:#bbb;transform:scaleX(0.6021);-webkit-text-stroke:0.03px #bbb">=</div>
<div class="t" style="left:286.50px;top:470.72px;font-size:6.541px;color:#333;transform:scaleX(0.9070);-webkit-text-stroke:0.03px #333">0</div>
<div class="t" style="left:282.30px;top:479.72px;font-size:6.541px;color:#bbb;transform:scaleX(0.6021);-webkit-text-stroke:0.03px #bbb">=</div>
<div class="t" style="left:286.50px;top:479.72px;font-size:6.541px;color:#333;transform:scaleX(0.7971);-webkit-text-stroke:0.03px #333">1</div>
<div class="t" style="left:385.50px;top:470.72px;font-size:6.541px;color:#aaa;transform:scaleX(0.9070);-webkit-text-stroke:0.03px #aaa">0</div>
<div class="t" style="left:385.50px;top:479.72px;font-size:6.541px;color:#aaa;transform:scaleX(0.7421);-webkit-text-stroke:0.03px #aaa">1</div>
<div class="t" style="left:591.80px;top:470.72px;font-size:6.541px;color:#333;transform:scaleX(0.9155);-webkit-text-stroke:0.03px #333">Undefined</div>
<div class="t" style="left:591.80px;top:479.72px;font-size:6.541px;color:#333;transform:scaleX(0.9155);-webkit-text-stroke:0.03px #333">Undefined</div>
<div class="t" style="left:212.60px;top:489.52px;font-size:6.541px;color:#c0c0c0;transform:scaleX(0.8895);-webkit-text-stroke:0.03px #c0c0c0">&lt;new parameter&gt;</div>
<div class="t" style="left:179.60px;top:504.32px;font-size:6.541px;color:#333;transform:scaleX(0.8253);-webkit-text-stroke:0.03px #333">Parameter List</div>
<div class="t" style="left:225.80px;top:504.32px;font-size:6.541px;color:#333;transform:scaleX(0.8170);-webkit-text-stroke:0.03px #333">Result Navigator</div>
<div class="t" style="left:682.50px;top:450.82px;font-size:6.541px;color:#333;transform:scaleX(0.7816);-webkit-text-stroke:0.03px #333">Messages</div>
<div class="t" style="left:693.50px;top:464.72px;font-size:6.541px;color:#333;transform:scaleX(0.8267);-webkit-text-stroke:0.03px #333;clip-path:inset(2.6px 0 0 0)">The following history blocks contain non ASCII characters either in their name or content:</div>
<div class="t" style="left:694.00px;top:471.82px;font-size:6.541px;color:#333;transform:scaleX(0.8616);-webkit-text-stroke:0.03px #333">4, 37.</div>
<div class="t" style="left:693.50px;top:482.52px;font-size:6.541px;color:#333;transform:scaleX(0.8236);-webkit-text-stroke:0.03px #333">Some objects were hidden when this project was last saved. These objects are still hidden.</div>
<div class="t" style="left:693.50px;top:492.92px;font-size:6.541px;color:#333;transform:scaleX(0.8144);-webkit-text-stroke:0.03px #333">Schematic window of SP1_innerPair contains tasks in the navigation tree.</div>
<div class="t" style="left:687.00px;top:504.32px;font-size:6.541px;color:#333;transform:scaleX(0.7883);-webkit-text-stroke:0.03px #333">Messages</div>
<div class="t" style="left:722.20px;top:504.32px;font-size:6.541px;color:#333;transform:scaleX(0.7832);-webkit-text-stroke:0.03px #333">Progress</div>
</body></html>
